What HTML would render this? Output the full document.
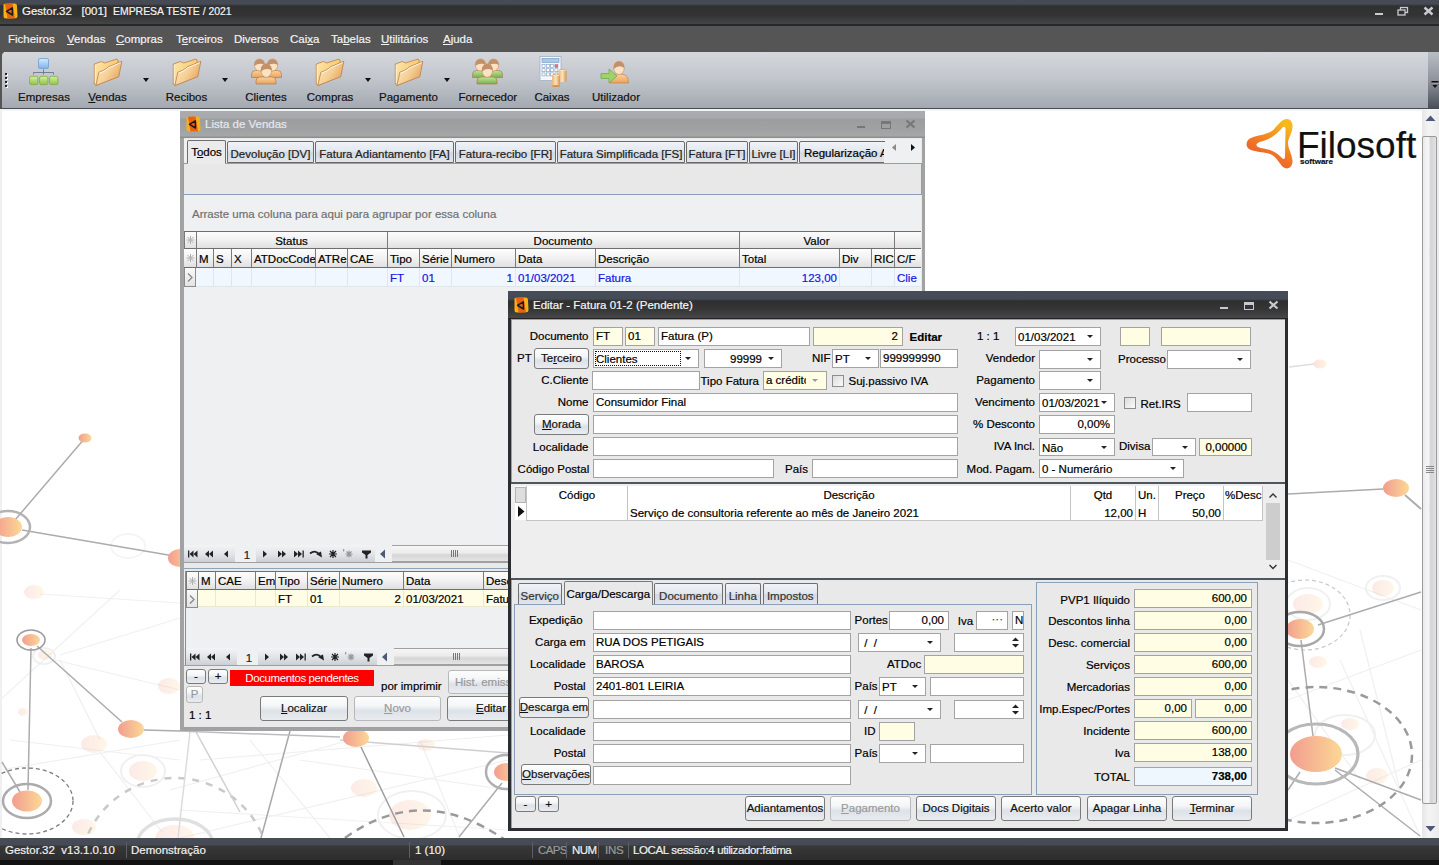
<!DOCTYPE html><html><head><meta charset="utf-8"><style>
*{margin:0;padding:0}
html,body{width:1439px;height:865px;overflow:hidden;background:#fff;font-family:"Liberation Sans",sans-serif;}
div{position:absolute;box-sizing:border-box}
.t{white-space:nowrap;line-height:1;-webkit-text-stroke:0.2px currentColor}
u{text-decoration:underline;text-underline-offset:1px}
svg{position:absolute}
</style></head><body>
<div style="left:0px;top:110px;width:1439px;height:728px;background:#fff"></div>
<div style="left:0px;top:110px;width:2px;height:728px;background:#eef0f2"></div>
<div style="left:0px;top:109px;width:1439px;height:2px;background:#f2f3f4"></div>
<svg style="left:0;top:0" width="1439" height="865"><defs><linearGradient id="og" x1="0" x2="1" y1="0" y2="0"><stop offset="0" stop-color="#f29d8f"/><stop offset="1" stop-color="#fcd896"/></linearGradient><linearGradient id="lg" x1="0" x2="1" y1="1" y2="0"><stop offset="0" stop-color="#ee4f2b"/><stop offset="1" stop-color="#f9b21a"/></linearGradient></defs><line x1="40" y1="594" x2="180" y2="603" stroke="#f0f0f0" stroke-width="1.2" opacity="1"/><line x1="60" y1="655" x2="180" y2="618" stroke="#f0f0f0" stroke-width="1.2" opacity="1"/><line x1="55" y1="660" x2="180" y2="690" stroke="#f0f0f0" stroke-width="1.2" opacity="1"/><line x1="0" y1="700" x2="120" y2="590" stroke="#f0f0f0" stroke-width="1.2" opacity="1"/><line x1="10" y1="740" x2="180" y2="760" stroke="#f0f0f0" stroke-width="1.2" opacity="1"/><line x1="0" y1="770" x2="180" y2="740" stroke="#f0f0f0" stroke-width="1.2" opacity="1"/><line x1="60" y1="660" x2="100" y2="740" stroke="#f0f0f0" stroke-width="1.2" opacity="1"/><line x1="100" y1="752" x2="162" y2="832" stroke="#f0f0f0" stroke-width="1.2" opacity="1"/><line x1="170" y1="790" x2="350" y2="740" stroke="#f0f0f0" stroke-width="1.2" opacity="1"/><line x1="200" y1="760" x2="508" y2="735" stroke="#f0f0f0" stroke-width="1.2" opacity="1"/><line x1="300" y1="760" x2="508" y2="790" stroke="#f0f0f0" stroke-width="1.2" opacity="1"/><line x1="180" y1="838" x2="508" y2="760" stroke="#f0f0f0" stroke-width="1.2" opacity="1"/><line x1="250" y1="740" x2="330" y2="838" stroke="#f0f0f0" stroke-width="1.2" opacity="1"/><line x1="420" y1="740" x2="460" y2="838" stroke="#f0f0f0" stroke-width="1.2" opacity="1"/><line x1="180" y1="810" x2="508" y2="830" stroke="#f0f0f0" stroke-width="1.2" opacity="1"/><line x1="1288" y1="560" x2="1421" y2="610" stroke="#f0f0f0" stroke-width="1.2" opacity="1"/><line x1="1288" y1="700" x2="1421" y2="650" stroke="#f0f0f0" stroke-width="1.2" opacity="1"/><line x1="1340" y1="660" x2="1421" y2="838" stroke="#f0f0f0" stroke-width="1.2" opacity="1"/><line x1="1288" y1="820" x2="1421" y2="760" stroke="#f0f0f0" stroke-width="1.2" opacity="1"/><line x1="1360" y1="630" x2="1400" y2="790" stroke="#f0f0f0" stroke-width="1.2" opacity="1"/><line x1="1288" y1="680" x2="1360" y2="780" stroke="#f0f0f0" stroke-width="1.2" opacity="1"/><ellipse cx="34" cy="592" rx="10" ry="7" fill="url(#og)" opacity="0.22"/><ellipse cx="169" cy="686" rx="11" ry="8" fill="url(#og)" opacity="0.22"/><ellipse cx="94" cy="744" rx="13" ry="9" fill="url(#og)" opacity="0.22"/><ellipse cx="84" cy="827" rx="12" ry="8" fill="url(#og)" opacity="0.22"/><ellipse cx="143" cy="771" rx="14" ry="10" fill="url(#og)" opacity="0.22"/><ellipse cx="175" cy="839" rx="20" ry="14" fill="url(#og)" opacity="0.22"/><ellipse cx="23" cy="712" rx="5" ry="4" fill="url(#og)" opacity="0.22"/><ellipse cx="45" cy="655" rx="7" ry="5" fill="url(#og)" opacity="0.22"/><ellipse cx="364" cy="788" rx="13" ry="9" fill="url(#og)" opacity="0.22"/><ellipse cx="410" cy="815" rx="21" ry="15" fill="url(#og)" opacity="0.22"/><ellipse cx="426" cy="745" rx="9" ry="6" fill="url(#og)" opacity="0.22"/><ellipse cx="1308" cy="604" rx="15" ry="10" fill="url(#og)" opacity="0.22"/><ellipse cx="1383" cy="588" rx="11" ry="8" fill="url(#og)" opacity="0.22"/><ellipse cx="1377" cy="776" rx="11" ry="8" fill="url(#og)" opacity="0.22"/><ellipse cx="1350" cy="724" rx="9" ry="6" fill="url(#og)" opacity="0.22"/><ellipse cx="1318" cy="662" rx="9" ry="6" fill="url(#og)" opacity="0.22"/><ellipse cx="128" cy="546" rx="17" ry="12" fill="none" stroke="#f5f5f5" stroke-width="2" opacity="1"/><ellipse cx="143" cy="771" rx="22" ry="16" fill="none" stroke="#f0f0f0" stroke-width="2" opacity="1"/><ellipse cx="44" cy="656" rx="11" ry="8" fill="none" stroke="#f0f0f0" stroke-width="2" opacity="1"/><ellipse cx="1383" cy="588" rx="17" ry="12" fill="none" stroke="#f0f0f0" stroke-width="2" opacity="1"/><ellipse cx="1308" cy="604" rx="22" ry="16" fill="none" stroke="#f0f0f0" stroke-width="2" opacity="1"/><ellipse cx="412" cy="815" rx="34" ry="24" fill="none" stroke="#f0f0f0" stroke-width="2" opacity="1"/><ellipse cx="1345" cy="735" rx="30" ry="20" fill="none" stroke="#f0f0f0" stroke-width="2" opacity="1"/><ellipse cx="175" cy="845" rx="38" ry="26" fill="none" stroke="#e0e0e0" stroke-width="3.5" opacity="1"/><ellipse cx="1305" cy="615" rx="45" ry="35" fill="none" stroke="#c8c8c8" stroke-width="1.2" stroke-dasharray="4 3" opacity="1"/><ellipse cx="175" cy="872" rx="95" ry="94" fill="none" stroke="#c9c9c9" stroke-width="2.5" stroke-dasharray="7 7" opacity="1"/><path d="M345 838 Q 422 782 505 840" fill="none" stroke="#9a9a9a" stroke-width="2.5" stroke-dasharray="8 6"/><line x1="1289" y1="367" x2="1314" y2="364" stroke="#dedede" stroke-width="1.5" opacity="1"/><ellipse cx="1320" cy="364" rx="6.5" ry="4.5" fill="url(#og)" opacity="0.3"/><line x1="85" y1="438" x2="15" y2="520" stroke="#acacac" stroke-width="1.5" opacity="1"/><line x1="22" y1="530" x2="180" y2="557" stroke="#acacac" stroke-width="1.5" opacity="1"/><line x1="31" y1="648" x2="28" y2="790" stroke="#acacac" stroke-width="1.5" opacity="1"/><line x1="37" y1="646" x2="122" y2="722" stroke="#acacac" stroke-width="1.5" opacity="1"/><line x1="144" y1="730" x2="180" y2="731" stroke="#acacac" stroke-width="1.5" opacity="1"/><line x1="2" y1="762" x2="20" y2="792" stroke="#acacac" stroke-width="1.5" opacity="1"/><line x1="290" y1="731" x2="261" y2="838" stroke="#a8a8a8" stroke-width="1.5" opacity="1"/><line x1="190" y1="732" x2="178" y2="838" stroke="#dcdcdc" stroke-width="1.5" opacity="1"/><line x1="196" y1="732" x2="240" y2="812" stroke="#d0d0d0" stroke-width="1.5" opacity="1"/><line x1="178" y1="731" x2="340" y2="737" stroke="#bdbdbd" stroke-width="1.5" opacity="1"/><line x1="361" y1="747" x2="404" y2="837" stroke="#9e9e9e" stroke-width="1.5" opacity="1"/><line x1="502" y1="783" x2="459" y2="837" stroke="#acacac" stroke-width="1.5" opacity="1"/><line x1="340" y1="740" x2="508" y2="753" stroke="#cfcfcf" stroke-width="1.5" opacity="1"/><line x1="1288" y1="494" x2="1383" y2="489" stroke="#acacac" stroke-width="1.5" opacity="1"/><line x1="1405" y1="495" x2="1421" y2="509" stroke="#acacac" stroke-width="2" opacity="1"/><line x1="1318" y1="625" x2="1421" y2="592" stroke="#acacac" stroke-width="1.5" opacity="1"/><line x1="1301" y1="640" x2="1313" y2="736" stroke="#acacac" stroke-width="1.5" opacity="1"/><line x1="1335" y1="768" x2="1421" y2="800" stroke="#acacac" stroke-width="1.5" opacity="1"/><line x1="1335" y1="770" x2="1420" y2="836" stroke="#acacac" stroke-width="1.5" opacity="1"/><line x1="1300" y1="772" x2="1288" y2="790" stroke="#acacac" stroke-width="1.5" opacity="1"/><ellipse cx="8" cy="527" rx="22" ry="16" fill="none" stroke="#b3b3b3" stroke-width="2.5" opacity="1"/><ellipse cx="31" cy="640" rx="14" ry="10" fill="none" stroke="#9d9d9d" stroke-width="1.6" opacity="1"/><ellipse cx="27" cy="801" rx="24" ry="17" fill="none" stroke="#ababab" stroke-width="2.5" opacity="1"/><ellipse cx="27" cy="801" rx="46" ry="33" fill="none" stroke="#7d7d7d" stroke-width="1.3" stroke-dasharray="4 3" opacity="1"/><ellipse cx="506" cy="772" rx="20" ry="17" fill="none" stroke="#b0b0b0" stroke-width="2.5" opacity="1"/><ellipse cx="1300" cy="629" rx="24" ry="17" fill="none" stroke="#a8a8a8" stroke-width="2.5" opacity="1"/><ellipse cx="1316" cy="754" rx="42" ry="30" fill="none" stroke="#b8b8b8" stroke-width="3.2" opacity="1"/><ellipse cx="1316" cy="755" rx="96" ry="68" fill="none" stroke="#9a9a9a" stroke-width="2.5" stroke-dasharray="8 6" opacity="1"/><ellipse cx="85" cy="438" rx="6.5" ry="4.5" fill="url(#og)" opacity="1"/><ellipse cx="8" cy="527" rx="14" ry="10" fill="url(#og)" opacity="1"/><ellipse cx="180" cy="558" rx="12" ry="9" fill="url(#og)" opacity="1"/><ellipse cx="31" cy="640" rx="9" ry="6" fill="url(#og)" opacity="1"/><ellipse cx="131" cy="729" rx="13" ry="9" fill="url(#og)" opacity="1"/><ellipse cx="27" cy="801" rx="15" ry="10.5" fill="url(#og)" opacity="1"/><ellipse cx="356" cy="738" rx="13" ry="9" fill="url(#og)" opacity="1"/><ellipse cx="506" cy="772" rx="12" ry="9" fill="url(#og)" opacity="1"/><ellipse cx="1396" cy="488" rx="13" ry="9" fill="url(#og)" opacity="1"/><ellipse cx="1300" cy="629" rx="14" ry="10" fill="url(#og)" opacity="1"/><ellipse cx="1316" cy="754" rx="26" ry="18" fill="url(#og)" opacity="1"/></svg>
<svg style="left:1240px;top:110px" width="60" height="65" viewBox="0 0 60 65"><defs><linearGradient id="lg2" x1="0.75" y1="0.05" x2="0.25" y2="0.95"><stop offset="0" stop-color="#f7b91a"/><stop offset="0.55" stop-color="#f17a26"/><stop offset="1" stop-color="#ea512d"/></linearGradient></defs><path fill-rule="evenodd" fill="url(#lg2)" d="M46 9 C50 8.5 53 12 52.5 17 C52 24 48 28 48 33 C48 39 53 46 52.5 52 C52 58 47 60 43 57 C39 53 36 46 30 44 C24 42 14 42 9 39 C5 36 6 30 11 28 C17 25 26 25 32 21 C37 17 40 10 46 9 Z M43 17 C45 16 46 18 45.5 21 L45 46 C45 49 44 50 42 48 C38 44 34 41 28 39.5 C22 38 17 38 16.5 35 C16 33 20 32 26 30 C32 28 38 23 43 17 Z"/></svg>
<div class="t" style="left:1297px;top:126.68px;font-size:37px;color:#111;">Filosoft</div>
<div class="t" style="left:1300px;top:158.23px;font-size:8px;color:#111;font-weight:bold;">software</div>
<div style="left:0px;top:0px;width:1439px;height:25px;background:linear-gradient(#464b55 0,#454a54 4px,#2f3030 6px,#333 15px,#454545 24px)"></div>
<div style="left:0px;top:24px;width:1439px;height:2px;background:#26292c"></div>
<svg style="left:2px;top:3px" width="16" height="16" viewBox="0 0 16 16"><path d="M1.5 3 Q1 0.5 4 0.8 L12.5 0.5 Q15 0.5 15 3 L15.5 13 Q15.5 15.5 13 15.3 L4 15.5 Q1.5 15.5 1.5 13 Z" fill="#f5b01a"/><path d="M3 0.8 L10.5 0.6 L13 15.3 L5.5 15.5 Z" fill="#e8620f"/><path d="M4.5 8.3 L10.3 4.8 L10.5 12 Z" fill="none" stroke="#1a1a1a" stroke-width="1.5" stroke-linejoin="round"/></svg>
<div class="t" style="left:22px;top:6.27px;font-size:11.5px;color:#f4f4f4;">Gestor.32&nbsp;&nbsp;&nbsp;[001]&nbsp;&nbsp;<span style="display:inline-block;transform:scaleX(0.907);transform-origin:0 0">EMPRESA TESTE / 2021</span></div>
<div style="left:1375px;top:13px;width:8px;height:2px;background:#c8ccd2"></div>
<svg style="left:1397px;top:6px" width="12" height="10"><rect x="3.5" y="1.5" width="7" height="5" fill="none" stroke="#c8ccd2" stroke-width="1.3"/><rect x="1" y="4" width="7" height="5" fill="#333" stroke="#c8ccd2" stroke-width="1.3"/></svg>
<svg style="left:1423px;top:6px" width="11" height="10"><path d="M1.5 1.5 L9.5 8.5 M9.5 1.5 L1.5 8.5" stroke="#c8ccd2" stroke-width="2.4"/></svg>
<div style="left:0px;top:26px;width:1439px;height:26px;background:#555"></div>
<div class="t" style="left:8px;top:34.27px;font-size:11.5px;color:#f2f2f2;">Ficheiros</div>
<div class="t" style="left:67px;top:34.27px;font-size:11.5px;color:#f2f2f2;"><u>V</u>endas</div>
<div class="t" style="left:116px;top:34.27px;font-size:11.5px;color:#f2f2f2;"><u>C</u>ompras</div>
<div class="t" style="left:176px;top:34.27px;font-size:11.5px;color:#f2f2f2;">T<u>e</u>rceiros</div>
<div class="t" style="left:234px;top:34.27px;font-size:11.5px;color:#f2f2f2;">Diversos</div>
<div class="t" style="left:290px;top:34.27px;font-size:11.5px;color:#f2f2f2;">Cai<u>x</u>a</div>
<div class="t" style="left:331px;top:34.27px;font-size:11.5px;color:#f2f2f2;">Ta<u>b</u>elas</div>
<div class="t" style="left:381px;top:34.27px;font-size:11.5px;color:#f2f2f2;"><u>U</u>tilitários</div>
<div class="t" style="left:443px;top:34.27px;font-size:11.5px;color:#f2f2f2;"><u>A</u>juda</div>
<div style="left:0px;top:52px;width:4px;height:57px;background:#555"></div>
<div style="left:2px;top:52px;width:1426px;height:56px;background:linear-gradient(#d4d7dc,#c3c7cd 45%,#a4a9b1);border-radius:4px 0 0 0"></div>
<div style="left:1428px;top:52px;width:11px;height:56px;background:linear-gradient(#b9bdc4,#8f949c 50%,#4b4f57)"></div>
<svg style="left:1431px;top:81px" width="8" height="9"><rect x="0.5" y="0" width="7" height="1.5" fill="#111"/><path d="M0.5 3 L7.5 3 L4 7 Z" fill="#111"/><path d="M1 3.2 L7 3.2" stroke="#fff" stroke-width="0.6"/></svg>
<div style="left:0px;top:108px;width:1439px;height:1px;background:#474c54"></div>
<div style="left:6px;top:74px;width:2px;height:2px;background:#fff"></div>
<div style="left:5px;top:73px;width:2px;height:2px;background:#222"></div>
<div style="left:6px;top:78px;width:2px;height:2px;background:#fff"></div>
<div style="left:5px;top:77px;width:2px;height:2px;background:#222"></div>
<div style="left:6px;top:82px;width:2px;height:2px;background:#fff"></div>
<div style="left:5px;top:81px;width:2px;height:2px;background:#222"></div>
<div style="left:6px;top:86px;width:2px;height:2px;background:#fff"></div>
<div style="left:5px;top:85px;width:2px;height:2px;background:#222"></div>
<svg style="left:0;top:0" width="1" height="1"><defs>
<linearGradient id="fo1" x1="0" y1="0" x2="1" y2="0.5"><stop offset="0" stop-color="#fde7b0"/><stop offset="1" stop-color="#f6c566"/></linearGradient>
<linearGradient id="fo2" x1="0" y1="0.2" x2="1" y2="0.8"><stop offset="0" stop-color="#fde6bc"/><stop offset="0.5" stop-color="#f5cf94"/><stop offset="1" stop-color="#e39a52"/></linearGradient>
<linearGradient id="bl" x1="0" y1="0" x2="0" y2="1"><stop offset="0" stop-color="#d5e9fb"/><stop offset="1" stop-color="#7fb2e6"/></linearGradient>
<linearGradient id="gr" x1="0" y1="0" x2="0" y2="1"><stop offset="0" stop-color="#d6ef9c"/><stop offset="1" stop-color="#8fc44a"/></linearGradient>
<radialGradient id="sk" cx="0.5" cy="0.4" r="0.6"><stop offset="0" stop-color="#fbdcb8"/><stop offset="1" stop-color="#d9955c"/></radialGradient>
<linearGradient id="bo" x1="0" y1="0" x2="0" y2="1"><stop offset="0" stop-color="#fad2a0"/><stop offset="1" stop-color="#e9a35c"/></linearGradient>
<linearGradient id="bg2" x1="0" y1="0" x2="0" y2="1"><stop offset="0" stop-color="#c4e49a"/><stop offset="1" stop-color="#77b04a"/></linearGradient>
<linearGradient id="co" x1="0" y1="0" x2="1" y2="0"><stop offset="0" stop-color="#e9b679"/><stop offset="0.5" stop-color="#fde2b8"/><stop offset="1" stop-color="#d59552"/></linearGradient>
</defs></svg>
<svg style="left:29px;top:58px" width="30" height="28" viewBox="0 0 30 28"><rect x="9.5" y="0.5" width="10" height="10" rx="1.5" fill="url(#bl)" stroke="#6d9fd3" stroke-width="0.8"/><path d="M14.5 11.5 V16.5 M4.5 16.5 V14.5 H24.5 V16.5" stroke="#69778a" stroke-width="0.9" fill="none"/><rect x="0.6" y="18.3" width="8.3" height="8.3" rx="1.5" fill="url(#gr)" stroke="#7cab3e" stroke-width="0.8"/><rect x="10.6" y="18.3" width="8.3" height="8.3" rx="1.5" fill="url(#gr)" stroke="#7cab3e" stroke-width="0.8"/><rect x="20.6" y="18.3" width="8.3" height="8.3" rx="1.5" fill="url(#gr)" stroke="#7cab3e" stroke-width="0.8"/></svg>
<svg style="left:93px;top:58px" width="30" height="29" viewBox="0 0 30 29"><path d="M1.3 6 L8.5 3.5 L11.7 5 L24 1 L25 2 L25.5 18 L3 27.5 L1.3 26 Z" fill="url(#fo1)" stroke="#b98048" stroke-width="0.8"/><path d="M5.8 14.3 Q11 12.5 13.5 10.5 Q15 8.5 17 8.2 L28.8 3.3 L25.8 18.7 L2.9 27.5 Z" fill="url(#fo2)" stroke="#b98048" stroke-width="0.8"/><path d="M6.5 15.2 Q11.5 13.3 14 11.3 Q15.5 9.4 17.3 9.1 L27.8 4.6" fill="none" stroke="#fff" stroke-width="0.9" opacity="0.9"/><path d="M2.2 7 L2.2 25" stroke="#fff" stroke-width="0.8" opacity="0.7"/></svg>
<svg style="left:172px;top:58px" width="30" height="29" viewBox="0 0 30 29"><path d="M1.3 6 L8.5 3.5 L11.7 5 L24 1 L25 2 L25.5 18 L3 27.5 L1.3 26 Z" fill="url(#fo1)" stroke="#b98048" stroke-width="0.8"/><path d="M5.8 14.3 Q11 12.5 13.5 10.5 Q15 8.5 17 8.2 L28.8 3.3 L25.8 18.7 L2.9 27.5 Z" fill="url(#fo2)" stroke="#b98048" stroke-width="0.8"/><path d="M6.5 15.2 Q11.5 13.3 14 11.3 Q15.5 9.4 17.3 9.1 L27.8 4.6" fill="none" stroke="#fff" stroke-width="0.9" opacity="0.9"/><path d="M2.2 7 L2.2 25" stroke="#fff" stroke-width="0.8" opacity="0.7"/></svg>
<svg style="left:315px;top:58px" width="30" height="29" viewBox="0 0 30 29"><path d="M1.3 6 L8.5 3.5 L11.7 5 L24 1 L25 2 L25.5 18 L3 27.5 L1.3 26 Z" fill="url(#fo1)" stroke="#b98048" stroke-width="0.8"/><path d="M5.8 14.3 Q11 12.5 13.5 10.5 Q15 8.5 17 8.2 L28.8 3.3 L25.8 18.7 L2.9 27.5 Z" fill="url(#fo2)" stroke="#b98048" stroke-width="0.8"/><path d="M6.5 15.2 Q11.5 13.3 14 11.3 Q15.5 9.4 17.3 9.1 L27.8 4.6" fill="none" stroke="#fff" stroke-width="0.9" opacity="0.9"/><path d="M2.2 7 L2.2 25" stroke="#fff" stroke-width="0.8" opacity="0.7"/></svg>
<svg style="left:394px;top:58px" width="30" height="29" viewBox="0 0 30 29"><path d="M1.3 6 L8.5 3.5 L11.7 5 L24 1 L25 2 L25.5 18 L3 27.5 L1.3 26 Z" fill="url(#fo1)" stroke="#b98048" stroke-width="0.8"/><path d="M5.8 14.3 Q11 12.5 13.5 10.5 Q15 8.5 17 8.2 L28.8 3.3 L25.8 18.7 L2.9 27.5 Z" fill="url(#fo2)" stroke="#b98048" stroke-width="0.8"/><path d="M6.5 15.2 Q11.5 13.3 14 11.3 Q15.5 9.4 17.3 9.1 L27.8 4.6" fill="none" stroke="#fff" stroke-width="0.9" opacity="0.9"/><path d="M2.2 7 L2.2 25" stroke="#fff" stroke-width="0.8" opacity="0.7"/></svg>
<svg style="left:251px;top:58px" width="32" height="28" viewBox="0 0 32 28"><path d="M0.5 19.5 L0.5 16.5 Q0.5 12.5 4.5 12.5 L8.5 12.5 Q12.5 12.5 12.5 16.5 L12.5 19.5 Z" fill="url(#bo)" stroke="#b97a3e" stroke-width="0.7"/><ellipse cx="8.5" cy="7" rx="5.2" ry="6" fill="#fbe2c2" stroke="#c09070" stroke-width="0.6"/><path d="M3.3 7 Q3.3 1 8.5 1 Q13.7 1 13.7 7 Q8.5 4.0 3.3 8 Z" fill="#c2916a"/><path d="M18.5 19.5 L18.5 16.5 Q18.5 12.5 22.5 12.5 L26.5 12.5 Q30.5 12.5 30.5 16.5 L30.5 19.5 Z" fill="url(#bo)" stroke="#b97a3e" stroke-width="0.7"/><ellipse cx="21.5" cy="7" rx="5.2" ry="6" fill="#fbe2c2" stroke="#c09070" stroke-width="0.6"/><path d="M16.3 7 Q16.3 1 21.5 1 Q26.7 1 26.7 7 Q21.5 4.0 16.3 8 Z" fill="#c2916a"/><path d="M5 26 L5 23 Q5 19 9 19 L21 19 Q25 19 25 23 L25 26 Z" fill="url(#bo)" stroke="#b97a3e" stroke-width="0.7"/><ellipse cx="15.3" cy="12.5" rx="5.3" ry="6.8" fill="#fbe2c2" stroke="#c09070" stroke-width="0.6"/><path d="M10.0 12.5 Q10.0 5.7 15.3 5.7 Q20.6 5.7 20.6 12.5 Q15.3 9.1 10.0 13.5 Z" fill="#c2916a"/></svg>
<svg style="left:472px;top:58px" width="32" height="28" viewBox="0 0 32 28"><path d="M0.5 19.5 L0.5 16.5 Q0.5 12.5 4.5 12.5 L8.5 12.5 Q12.5 12.5 12.5 16.5 L12.5 19.5 Z" fill="url(#bg2)" stroke="#b97a3e" stroke-width="0.7"/><ellipse cx="8.5" cy="7" rx="5.2" ry="6" fill="#fbe2c2" stroke="#c09070" stroke-width="0.6"/><path d="M3.3 7 Q3.3 1 8.5 1 Q13.7 1 13.7 7 Q8.5 4.0 3.3 8 Z" fill="#c2916a"/><path d="M18.5 19.5 L18.5 16.5 Q18.5 12.5 22.5 12.5 L26.5 12.5 Q30.5 12.5 30.5 16.5 L30.5 19.5 Z" fill="url(#bg2)" stroke="#b97a3e" stroke-width="0.7"/><ellipse cx="21.5" cy="7" rx="5.2" ry="6" fill="#fbe2c2" stroke="#c09070" stroke-width="0.6"/><path d="M16.3 7 Q16.3 1 21.5 1 Q26.7 1 26.7 7 Q21.5 4.0 16.3 8 Z" fill="#c2916a"/><path d="M5 26 L5 23 Q5 19 9 19 L21 19 Q25 19 25 23 L25 26 Z" fill="url(#bg2)" stroke="#b97a3e" stroke-width="0.7"/><ellipse cx="15.3" cy="12.5" rx="5.3" ry="6.8" fill="#fbe2c2" stroke="#c09070" stroke-width="0.6"/><path d="M10.0 12.5 Q10.0 5.7 15.3 5.7 Q20.6 5.7 20.6 12.5 Q15.3 9.1 10.0 13.5 Z" fill="#c2916a"/></svg>
<svg style="left:539px;top:56px" width="28" height="31" viewBox="0 0 28 31"><rect x="1" y="0.5" width="21" height="24" fill="#f4f8fd" stroke="#9fb2c8" stroke-width="0.8"/><rect x="3" y="2.5" width="17" height="4" fill="#a9c8ea" stroke="#6f94bd" stroke-width="0.6"/><rect x="3.0" y="8.5" width="3" height="3" fill="#fff" stroke="#7d9cc0" stroke-width="0.6"/><rect x="7.3" y="8.5" width="3" height="3" fill="#fff" stroke="#7d9cc0" stroke-width="0.6"/><rect x="11.6" y="8.5" width="3" height="3" fill="#fff" stroke="#7d9cc0" stroke-width="0.6"/><rect x="15.899999999999999" y="8.5" width="3" height="3" fill="#fff" stroke="#7d9cc0" stroke-width="0.6"/><rect x="3.0" y="12.7" width="3" height="3" fill="#fff" stroke="#7d9cc0" stroke-width="0.6"/><rect x="7.3" y="12.7" width="3" height="3" fill="#fff" stroke="#7d9cc0" stroke-width="0.6"/><rect x="11.6" y="12.7" width="3" height="3" fill="#fff" stroke="#7d9cc0" stroke-width="0.6"/><rect x="15.899999999999999" y="12.7" width="3" height="3" fill="#fff" stroke="#7d9cc0" stroke-width="0.6"/><rect x="3.0" y="16.9" width="3" height="3" fill="#fff" stroke="#7d9cc0" stroke-width="0.6"/><rect x="7.3" y="16.9" width="3" height="3" fill="#fff" stroke="#7d9cc0" stroke-width="0.6"/><rect x="11.6" y="16.9" width="3" height="3" fill="#fff" stroke="#7d9cc0" stroke-width="0.6"/><rect x="15.899999999999999" y="16.9" width="3" height="3" fill="#fff" stroke="#7d9cc0" stroke-width="0.6"/><rect x="15.9" y="8.5" width="3" height="3" fill="#e66"/><ellipse cx="23.5" cy="15" rx="4" ry="1.8" fill="#fbe0b5" stroke="#c98d52" stroke-width="0.5"/><rect x="19.5" y="15" width="8" height="11" fill="url(#co)"/><ellipse cx="17" cy="20" rx="4" ry="1.8" fill="#fbe0b5" stroke="#c98d52" stroke-width="0.5"/><rect x="13" y="20" width="8" height="10" fill="url(#co)"/><ellipse cx="17" cy="30" rx="4" ry="1" fill="#d59552"/></svg>
<svg style="left:600px;top:58px" width="30" height="28" viewBox="0 0 30 28"><path d="M9.5 25 Q9.5 17 16 16 L22 16 Q28.5 17 28.5 25 Z" fill="url(#bo)" stroke="#c0854c" stroke-width="0.7"/><ellipse cx="19" cy="10" rx="5.3" ry="6.5" fill="#fbe2c2" stroke="#c09070" stroke-width="0.6"/><path d="M13.7 10 Q13.5 3.3 19 3.3 Q24.5 3.3 24.3 10 Q19 6 13.7 11 Z" fill="#c2916a"/><path d="M1 15.5 H9 V11 L17 18 L9 25 V20.5 H1 Z" fill="#9fd36a" stroke="#6aa843" stroke-width="0.7"/></svg>
<div style="left:143px;top:78px;width:0;height:0;border-left:3.5px solid transparent;border-right:3.5px solid transparent;border-top:4px solid #111"></div>
<div style="left:222px;top:78px;width:0;height:0;border-left:3.5px solid transparent;border-right:3.5px solid transparent;border-top:4px solid #111"></div>
<div style="left:365px;top:78px;width:0;height:0;border-left:3.5px solid transparent;border-right:3.5px solid transparent;border-top:4px solid #111"></div>
<div style="left:444px;top:78px;width:0;height:0;border-left:3.5px solid transparent;border-right:3.5px solid transparent;border-top:4px solid #111"></div>
<div class="t" style="left:-6.0px;width:100px;text-align:center;top:91.77px;font-size:11.5px;color:#111;">Empresas</div>
<div class="t" style="left:57.5px;width:100px;text-align:center;top:91.77px;font-size:11.5px;color:#111;"><u>V</u>endas</div>
<div class="t" style="left:136.5px;width:100px;text-align:center;top:91.77px;font-size:11.5px;color:#111;">Recibos</div>
<div class="t" style="left:216.0px;width:100px;text-align:center;top:91.77px;font-size:11.5px;color:#111;">Clientes</div>
<div class="t" style="left:280.0px;width:100px;text-align:center;top:91.77px;font-size:11.5px;color:#111;">Compras</div>
<div class="t" style="left:358.4px;width:100px;text-align:center;top:91.77px;font-size:11.5px;color:#111;">Pagamento</div>
<div class="t" style="left:437.8px;width:100px;text-align:center;top:91.77px;font-size:11.5px;color:#111;">Fornecedor</div>
<div class="t" style="left:502.0px;width:100px;text-align:center;top:91.77px;font-size:11.5px;color:#111;">Caixas</div>
<div class="t" style="left:566.0px;width:100px;text-align:center;top:91.77px;font-size:11.5px;color:#111;">Utilizador</div>
<div style="left:1422px;top:110px;width:17px;height:728px;background:linear-gradient(90deg,#e6e6e6,#f4f4f4 40%,#ececec)"></div>
<svg style="left:1424px;top:114px" width="13" height="8"><path d="M1.5 7 L6.5 1.5 L11.5 7 Z" fill="#4c5a7a"/></svg>
<svg style="left:1424px;top:825px" width="13" height="8"><path d="M1.5 1 L6.5 6.5 L11.5 1 Z" fill="#4c5a7a"/></svg>
<div style="left:1422px;top:136px;width:15px;height:668px;border:1px solid #9a9a9a;border-radius:2px;background:linear-gradient(90deg,#e9e9e9,#f7f7f7 40%,#d4d4d6 60%,#e2e2e4)"></div>
<div style="left:1426px;top:466px;width:8px;height:1px;background:#888"></div>
<div style="left:1426px;top:468px;width:8px;height:1px;background:#888"></div>
<div style="left:1426px;top:470px;width:8px;height:1px;background:#888"></div>
<div style="left:1426px;top:472px;width:8px;height:1px;background:#888"></div>
<div style="left:0px;top:838px;width:1439px;height:22px;background:linear-gradient(#474c57 0,#454a55 7px,#383838 8px,#333 14px,#2d2d2d 21px)"></div>
<div style="left:0px;top:860px;width:1439px;height:5px;background:#121212"></div>
<div style="left:393px;top:860px;width:48px;height:5px;background:#333"></div>
<div class="t" style="left:5px;top:845.27px;font-size:11.5px;color:#f0f0f0;">Gestor.32&nbsp;&nbsp;v13.1.0.10</div>
<div class="t" style="left:131px;top:845.27px;font-size:11.5px;color:#f0f0f0;">Demonstração</div>
<div class="t" style="left:415px;top:845.27px;font-size:11.5px;color:#f0f0f0;">1 (10)</div>
<div class="t" style="left:538px;top:845.27px;font-size:11.5px;color:#9a9a9a;letter-spacing:-0.6px">CAPS</div>
<div class="t" style="left:572px;top:845.27px;font-size:11.5px;color:#f0f0f0;letter-spacing:-0.6px">NUM</div>
<div class="t" style="left:605px;top:845.27px;font-size:11.5px;color:#9a9a9a;letter-spacing:-0.3px">INS</div>
<div class="t" style="left:633px;top:845.27px;font-size:11.5px;color:#f0f0f0;letter-spacing:-0.37px">LOCAL sessão:4 utilizador:fatima</div>
<div style="left:126px;top:842px;width:1px;height:16px;background:#1f2226;border-right:1px solid #5a5e66"></div>
<div style="left:409px;top:842px;width:1px;height:16px;background:#1f2226;border-right:1px solid #5a5e66"></div>
<div style="left:532px;top:842px;width:1px;height:16px;background:#1f2226;border-right:1px solid #5a5e66"></div>
<div style="left:566px;top:842px;width:1px;height:16px;background:#1f2226;border-right:1px solid #5a5e66"></div>
<div style="left:598px;top:842px;width:1px;height:16px;background:#1f2226;border-right:1px solid #5a5e66"></div>
<div style="left:628px;top:842px;width:1px;height:16px;background:#1f2226;border-right:1px solid #5a5e66"></div>
<div style="left:180px;top:111px;width:745px;height:620px;background:#a2a2a2"></div>
<div style="left:180px;top:111px;width:745px;height:27px;background:linear-gradient(#aaabaf,#a8a9ac 7px,#9c9d9f 8px,#a0a1a3 18px,#a6a7a9 25px,#8f8f8f 26px)"></div>
<svg style="left:185px;top:116px" width="16" height="16" viewBox="0 0 16 16"><path d="M1.5 3 Q1 0.5 4 0.8 L12.5 0.5 Q15 0.5 15 3 L15.5 13 Q15.5 15.5 13 15.3 L4 15.5 Q1.5 15.5 1.5 13 Z" fill="#f5b01a"/><path d="M3 0.8 L10.5 0.6 L13 15.3 L5.5 15.5 Z" fill="#e8620f"/><path d="M4.5 8.3 L10.3 4.8 L10.5 12 Z" fill="none" stroke="#1a1a1a" stroke-width="1.5" stroke-linejoin="round"/></svg>
<div class="t" style="left:205px;top:119.27px;font-size:11.5px;color:#e4e8ef;">Lista de Vendas</div>
<div style="left:857px;top:126px;width:8px;height:2px;background:#777"></div>
<div style="left:881px;top:121px;width:10px;height:8px;border:1.5px solid #777;border-top-width:3px"></div>
<svg style="left:905px;top:119px" width="11" height="10"><path d="M1.5 1.5 L9.5 8.5 M9.5 1.5 L1.5 8.5" stroke="#777" stroke-width="2.2"/></svg>
<div style="left:183px;top:138px;width:739px;height:590px;background:#e9e9e9;border-left:1px solid #a4a4a4;border-bottom:1px solid #8ea4bc"></div>
<div style="left:184px;top:139px;width:737px;height:24px;background:#eef0f2"></div>
<div style="left:227px;top:141px;width:87px;height:22px;background:linear-gradient(#f0f3f8,#e3e8ef 45%,#d3d9e1 55%,#e2e6ec);border:1px solid #6a6a6a;border-radius:2px 2px 0 0"></div>
<div class="t" style="left:170.5px;width:200px;text-align:center;top:149.27px;font-size:11.5px;color:#222;">Devolução [DV]</div>
<div style="left:315px;top:141px;width:139px;height:22px;background:linear-gradient(#f0f3f8,#e3e8ef 45%,#d3d9e1 55%,#e2e6ec);border:1px solid #6a6a6a;border-radius:2px 2px 0 0"></div>
<div class="t" style="left:284.5px;width:200px;text-align:center;top:149.27px;font-size:11.5px;color:#222;">Fatura Adiantamento [FA]</div>
<div style="left:455px;top:141px;width:101px;height:22px;background:linear-gradient(#f0f3f8,#e3e8ef 45%,#d3d9e1 55%,#e2e6ec);border:1px solid #6a6a6a;border-radius:2px 2px 0 0"></div>
<div class="t" style="left:405.5px;width:200px;text-align:center;top:149.27px;font-size:11.5px;color:#222;">Fatura-recibo [FR]</div>
<div style="left:557px;top:141px;width:128px;height:22px;background:linear-gradient(#f0f3f8,#e3e8ef 45%,#d3d9e1 55%,#e2e6ec);border:1px solid #6a6a6a;border-radius:2px 2px 0 0"></div>
<div class="t" style="left:521.0px;width:200px;text-align:center;top:149.27px;font-size:11.5px;color:#222;">Fatura Simplificada [FS]</div>
<div style="left:686px;top:141px;width:62px;height:22px;background:linear-gradient(#f0f3f8,#e3e8ef 45%,#d3d9e1 55%,#e2e6ec);border:1px solid #6a6a6a;border-radius:2px 2px 0 0"></div>
<div class="t" style="left:617.0px;width:200px;text-align:center;top:149.27px;font-size:11.5px;color:#222;">Fatura [FT]</div>
<div style="left:749px;top:141px;width:49px;height:22px;background:linear-gradient(#f0f3f8,#e3e8ef 45%,#d3d9e1 55%,#e2e6ec);border:1px solid #6a6a6a;border-radius:2px 2px 0 0"></div>
<div class="t" style="left:673.5px;width:200px;text-align:center;top:149.27px;font-size:11.5px;color:#222;">Livre [LI]</div>
<div style="left:799px;top:141px;width:86px;height:22px;overflow:hidden">
<div style="left:0;top:0;width:120px;height:22px;background:linear-gradient(#f0f3f8,#e3e8ef 45%,#d3d9e1 55%,#e2e6ec);border:1px solid #6a6a6a;border-radius:2px 2px 0 0"></div>
<div class="t" style="left:5px;top:7.3px;font-size:11.5px;color:#000;-webkit-text-stroke:0.2px #000">Regularização ATX</div>
</div>
<div style="left:884px;top:142px;width:37px;height:21px;background:#eef0f2"></div>
<svg style="left:890px;top:143px" width="30" height="10"><path d="M6 1 L2 4.5 L6 8 Z" fill="#8a8a8a"/><path d="M21 1 L25 4.5 L21 8 Z" fill="#111"/></svg>
<div style="left:187px;top:140px;width:39px;height:24px;background:#ebebeb;border:1px solid #6e6e6e;border-bottom:none;border-radius:2px 2px 0 0"></div>
<div class="t" style="left:106.5px;width:200px;text-align:center;top:147.27px;font-size:11.5px;color:#000;">T<u>o</u>dos</div>
<div style="left:183px;top:163px;width:739px;height:32px;background:#e8e8e8;border:1px solid #8aa0b8"></div>
<div style="left:188px;top:163px;width:37px;height:1px;background:#ebebeb"></div>
<div style="left:184px;top:195px;width:737px;height:36px;background:#eff0f2"></div>
<div class="t" style="left:192px;top:209.27px;font-size:11.5px;color:#707070;">Arraste uma coluna para aqui para agrupar por essa coluna</div>
<div style="left:184px;top:231px;width:737px;height:314px;background:#eff0f2"></div>
<div style="left:184px;top:231px;width:12px;height:18px;background:linear-gradient(#fdfdfd,#f2f2f2 50%,#e0e0e2);border-left:1px solid #7a7a7a;border-bottom:1px solid #6e6e6e"></div>
<div style="left:196px;top:231px;width:191px;height:18px;background:linear-gradient(#fdfdfd,#f2f2f2 50%,#e0e0e2);border-left:1px solid #7a7a7a;border-bottom:1px solid #6e6e6e"></div>
<div class="t" style="left:166.0px;width:251px;text-align:center;top:236.27px;font-size:11.5px;color:#000;">Status</div>
<div style="left:387px;top:231px;width:352px;height:18px;background:linear-gradient(#fdfdfd,#f2f2f2 50%,#e0e0e2);border-left:1px solid #7a7a7a;border-bottom:1px solid #6e6e6e"></div>
<div class="t" style="left:357.0px;width:412px;text-align:center;top:236.27px;font-size:11.5px;color:#000;">Documento</div>
<div style="left:739px;top:231px;width:155px;height:18px;background:linear-gradient(#fdfdfd,#f2f2f2 50%,#e0e0e2);border-left:1px solid #7a7a7a;border-bottom:1px solid #6e6e6e"></div>
<div class="t" style="left:709.0px;width:215px;text-align:center;top:236.27px;font-size:11.5px;color:#000;">Valor</div>
<div style="left:894px;top:231px;width:27px;height:18px;background:linear-gradient(#fdfdfd,#f2f2f2 50%,#e0e0e2);border-left:1px solid #7a7a7a;border-bottom:1px solid #6e6e6e"></div>
<div style="left:184px;top:231px;width:737px;height:1px;background:#6e6e6e"></div>
<div style="left:184px;top:249px;width:12px;height:19px;overflow:hidden;background:linear-gradient(#fdfdfd,#f2f2f2 50%,#e0e0e2);border-left:0px solid #7a7a7a;border-bottom:1px solid #6e6e6e"><div class="t" style="left:2px;top:5.3px;font-size:11.5px;color:#000;-webkit-text-stroke:0.2px #000"></div></div>
<div style="left:196px;top:249px;width:17px;height:19px;overflow:hidden;background:linear-gradient(#fdfdfd,#f2f2f2 50%,#e0e0e2);border-left:1px solid #7a7a7a;border-bottom:1px solid #6e6e6e"><div class="t" style="left:2px;top:5.3px;font-size:11.5px;color:#000;-webkit-text-stroke:0.2px #000">M</div></div>
<div style="left:213px;top:249px;width:18px;height:19px;overflow:hidden;background:linear-gradient(#fdfdfd,#f2f2f2 50%,#e0e0e2);border-left:1px solid #7a7a7a;border-bottom:1px solid #6e6e6e"><div class="t" style="left:2px;top:5.3px;font-size:11.5px;color:#000;-webkit-text-stroke:0.2px #000">S</div></div>
<div style="left:231px;top:249px;width:20px;height:19px;overflow:hidden;background:linear-gradient(#fdfdfd,#f2f2f2 50%,#e0e0e2);border-left:1px solid #7a7a7a;border-bottom:1px solid #6e6e6e"><div class="t" style="left:2px;top:5.3px;font-size:11.5px;color:#000;-webkit-text-stroke:0.2px #000">X</div></div>
<div style="left:251px;top:249px;width:64px;height:19px;overflow:hidden;background:linear-gradient(#fdfdfd,#f2f2f2 50%,#e0e0e2);border-left:1px solid #7a7a7a;border-bottom:1px solid #6e6e6e"><div class="t" style="left:2px;top:5.3px;font-size:11.5px;color:#000;-webkit-text-stroke:0.2px #000">ATDocCode</div></div>
<div style="left:315px;top:249px;width:32px;height:19px;overflow:hidden;background:linear-gradient(#fdfdfd,#f2f2f2 50%,#e0e0e2);border-left:1px solid #7a7a7a;border-bottom:1px solid #6e6e6e"><div class="t" style="left:2px;top:5.3px;font-size:11.5px;color:#000;-webkit-text-stroke:0.2px #000">ATRe</div></div>
<div style="left:347px;top:249px;width:40px;height:19px;overflow:hidden;background:linear-gradient(#fdfdfd,#f2f2f2 50%,#e0e0e2);border-left:1px solid #7a7a7a;border-bottom:1px solid #6e6e6e"><div class="t" style="left:2px;top:5.3px;font-size:11.5px;color:#000;-webkit-text-stroke:0.2px #000">CAE</div></div>
<div style="left:387px;top:249px;width:32px;height:19px;overflow:hidden;background:linear-gradient(#fdfdfd,#f2f2f2 50%,#e0e0e2);border-left:1px solid #7a7a7a;border-bottom:1px solid #6e6e6e"><div class="t" style="left:2px;top:5.3px;font-size:11.5px;color:#000;-webkit-text-stroke:0.2px #000">Tipo</div></div>
<div style="left:419px;top:249px;width:32px;height:19px;overflow:hidden;background:linear-gradient(#fdfdfd,#f2f2f2 50%,#e0e0e2);border-left:1px solid #7a7a7a;border-bottom:1px solid #6e6e6e"><div class="t" style="left:2px;top:5.3px;font-size:11.5px;color:#000;-webkit-text-stroke:0.2px #000">Série</div></div>
<div style="left:451px;top:249px;width:64px;height:19px;overflow:hidden;background:linear-gradient(#fdfdfd,#f2f2f2 50%,#e0e0e2);border-left:1px solid #7a7a7a;border-bottom:1px solid #6e6e6e"><div class="t" style="left:2px;top:5.3px;font-size:11.5px;color:#000;-webkit-text-stroke:0.2px #000">Numero</div></div>
<div style="left:515px;top:249px;width:80px;height:19px;overflow:hidden;background:linear-gradient(#fdfdfd,#f2f2f2 50%,#e0e0e2);border-left:1px solid #7a7a7a;border-bottom:1px solid #6e6e6e"><div class="t" style="left:2px;top:5.3px;font-size:11.5px;color:#000;-webkit-text-stroke:0.2px #000">Data</div></div>
<div style="left:595px;top:249px;width:144px;height:19px;overflow:hidden;background:linear-gradient(#fdfdfd,#f2f2f2 50%,#e0e0e2);border-left:1px solid #7a7a7a;border-bottom:1px solid #6e6e6e"><div class="t" style="left:2px;top:5.3px;font-size:11.5px;color:#000;-webkit-text-stroke:0.2px #000">Descrição</div></div>
<div style="left:739px;top:249px;width:100px;height:19px;overflow:hidden;background:linear-gradient(#fdfdfd,#f2f2f2 50%,#e0e0e2);border-left:1px solid #7a7a7a;border-bottom:1px solid #6e6e6e"><div class="t" style="left:2px;top:5.3px;font-size:11.5px;color:#000;-webkit-text-stroke:0.2px #000">Total</div></div>
<div style="left:839px;top:249px;width:32px;height:19px;overflow:hidden;background:linear-gradient(#fdfdfd,#f2f2f2 50%,#e0e0e2);border-left:1px solid #7a7a7a;border-bottom:1px solid #6e6e6e"><div class="t" style="left:2px;top:5.3px;font-size:11.5px;color:#000;-webkit-text-stroke:0.2px #000">Div</div></div>
<div style="left:871px;top:249px;width:23px;height:19px;overflow:hidden;background:linear-gradient(#fdfdfd,#f2f2f2 50%,#e0e0e2);border-left:1px solid #7a7a7a;border-bottom:1px solid #6e6e6e"><div class="t" style="left:2px;top:5.3px;font-size:11.5px;color:#000;-webkit-text-stroke:0.2px #000">RIC</div></div>
<div style="left:894px;top:249px;width:27px;height:19px;overflow:hidden;background:linear-gradient(#fdfdfd,#f2f2f2 50%,#e0e0e2);border-left:1px solid #7a7a7a;border-bottom:1px solid #6e6e6e"><div class="t" style="left:2px;top:5.3px;font-size:11.5px;color:#000;-webkit-text-stroke:0.2px #000">C/F</div></div>
<svg style="left:186px;top:235px" width="9" height="30"><g stroke="#b0b0b0" stroke-width="1"><path d="M4.5 1 V9 M0.5 5 H8.5 M1.5 2 L7.5 8 M7.5 2 L1.5 8"/><path d="M4.5 19 V27 M0.5 23 H8.5 M1.5 20 L7.5 26 M7.5 20 L1.5 26"/></g></svg>
<div style="left:184px;top:268px;width:737px;height:19px;background:#f1f7ff;border-bottom:1px solid #e0e6ee"></div>
<div style="left:184px;top:268px;width:12px;height:19px;background:linear-gradient(#fafafa,#e4e4e4);border:1px solid #8c8c8c;border-top:none"></div>
<svg style="left:186px;top:272px" width="8" height="11"><path d="M2 1.5 L6 5.5 L2 9.5" stroke="#888" stroke-width="1.3" fill="none"/></svg>
<div style="left:213px;top:268px;width:1px;height:19px;background:#e2e6ec"></div>
<div style="left:231px;top:268px;width:1px;height:19px;background:#e2e6ec"></div>
<div style="left:251px;top:268px;width:1px;height:19px;background:#e2e6ec"></div>
<div style="left:315px;top:268px;width:1px;height:19px;background:#e2e6ec"></div>
<div style="left:347px;top:268px;width:1px;height:19px;background:#e2e6ec"></div>
<div style="left:387px;top:268px;width:1px;height:19px;background:#e2e6ec"></div>
<div style="left:419px;top:268px;width:1px;height:19px;background:#e2e6ec"></div>
<div style="left:451px;top:268px;width:1px;height:19px;background:#e2e6ec"></div>
<div style="left:515px;top:268px;width:1px;height:19px;background:#e2e6ec"></div>
<div style="left:595px;top:268px;width:1px;height:19px;background:#e2e6ec"></div>
<div style="left:739px;top:268px;width:1px;height:19px;background:#e2e6ec"></div>
<div style="left:839px;top:268px;width:1px;height:19px;background:#e2e6ec"></div>
<div style="left:871px;top:268px;width:1px;height:19px;background:#e2e6ec"></div>
<div style="left:894px;top:268px;width:1px;height:19px;background:#e2e6ec"></div>
<div class="t" style="left:390px;top:273.27px;font-size:11.5px;color:#1515e6;">FT</div>
<div class="t" style="left:422px;top:273.27px;font-size:11.5px;color:#1515e6;">01</div>
<div class="t" style="left:113px;width:400px;text-align:right;top:273.27px;font-size:11.5px;color:#1515e6;">1</div>
<div class="t" style="left:518px;top:273.27px;font-size:11.5px;color:#1515e6;">01/03/2021</div>
<div class="t" style="left:598px;top:273.27px;font-size:11.5px;color:#1515e6;">Fatura</div>
<div class="t" style="left:437px;width:400px;text-align:right;top:273.27px;font-size:11.5px;color:#1515e6;">123,00</div>
<div class="t" style="left:897px;top:273.27px;font-size:11.5px;color:#1515e6;">Clie</div>
<div style="left:184px;top:545px;width:330px;height:18px;background:linear-gradient(#f3f4f6,#e1e4e8 50%,#c9cdd3)"></div>
<div style="left:235px;top:545px;width:21px;height:17px;background:#eef0f2"></div>
<div style="left:375px;top:545px;width:17px;height:17px;background:#eef0f2"></div>
<svg style="left:0px;top:545px" width="400" height="18" viewBox="0 0 400 18"><g fill="#222"><rect x="188" y="5.5" width="1.3" height="7"/><path d="M189.5 9 L193.5 5.5 L193.5 12.5 Z" fill="#222"/><path d="M193.5 9 L197.5 5.5 L197.5 12.5 Z" fill="#222"/><path d="M205 9 L209 5.5 L209 12.5 Z" fill="#222"/><path d="M209 9 L213 5.5 L213 12.5 Z" fill="#222"/><path d="M224 9 L228 5.5 L228 12.5 Z" fill="#222"/><path d="M267 9 L263 5.5 L263 12.5 Z" fill="#222"/><path d="M282 9 L278 5.5 L278 12.5 Z" fill="#222"/><path d="M286 9 L282 5.5 L282 12.5 Z" fill="#222"/><path d="M298 9 L294 5.5 L294 12.5 Z" fill="#222"/><path d="M302 9 L298 5.5 L298 12.5 Z" fill="#222"/><rect x="302.5" y="5.5" width="1.3" height="7"/><path d="M310 8.5 Q315 4.5 319 9" stroke="#222" stroke-width="1.8" fill="none"/><path d="M316 9 L322 12.5 L321 6.5 Z"/><g stroke="#222" stroke-width="1.2"><path d="M333 5 V13 M329 9 H337 M330 6 L336 12 M336 6 L330 12"/></g><g stroke="#999" stroke-width="1.1"><path d="M349 5.5 V12.5 M345.5 9 H352.5 M346.5 6.5 L351.5 11.5 M351.5 6.5 L346.5 11.5"/></g><rect x="343" y="4" width="1.2" height="2.5" fill="#999"/><path d="M362 5.5 H371 V7.5 L367.5 10 V13.5 H365.5 V10 L362 7.5 Z"/><path d="M380 9 L385 4.5 L385 13.5 Z" fill="#4c5a7a"/></g></svg>
<div class="t" style="left:237.0px;width:20px;text-align:center;top:549.57px;font-size:11.5px;color:#222;">1</div>
<div style="left:392px;top:545px;width:122px;height:17px;background:linear-gradient(#f6f6f6,#ececec 45%,#d6d6d6 60%,#e4e4e4);border-top:1px solid #a0a0a0;border-bottom:1px solid #a0a0a0"></div>
<div style="left:451px;top:550px;width:1px;height:7px;background:#777"></div>
<div style="left:453px;top:550px;width:1px;height:7px;background:#777"></div>
<div style="left:455px;top:550px;width:1px;height:7px;background:#777"></div>
<div style="left:457px;top:550px;width:1px;height:7px;background:#777"></div>
<div style="left:184px;top:562px;width:737px;height:1px;background:#a0a0a0"></div>
<div style="left:184px;top:563px;width:737px;height:5px;background:#e9e9e9"></div>
<div style="left:184px;top:568px;width:737px;height:1px;background:#8ea4bc"></div>
<div style="left:184px;top:569px;width:737px;height:2px;background:#e9e9e9"></div>
<div style="left:184px;top:571px;width:330px;height:77px;background:#eff0f2"></div>
<div style="left:185px;top:571px;width:1px;height:94px;background:#8c8c8c"></div>
<div style="left:186px;top:571px;width:12px;height:19px;overflow:hidden;background:linear-gradient(#fdfdfd,#f2f2f2 50%,#e0e0e2);border-left:1px solid #7a7a7a;border-bottom:1px solid #6e6e6e;border-top:1px solid #6e6e6e"><div class="t" style="left:2px;top:3.8px;font-size:11.5px;color:#000;-webkit-text-stroke:0.2px #000"></div></div>
<div style="left:198px;top:571px;width:17px;height:19px;overflow:hidden;background:linear-gradient(#fdfdfd,#f2f2f2 50%,#e0e0e2);border-left:1px solid #7a7a7a;border-bottom:1px solid #6e6e6e;border-top:1px solid #6e6e6e"><div class="t" style="left:2px;top:3.8px;font-size:11.5px;color:#000;-webkit-text-stroke:0.2px #000">M</div></div>
<div style="left:215px;top:571px;width:40px;height:19px;overflow:hidden;background:linear-gradient(#fdfdfd,#f2f2f2 50%,#e0e0e2);border-left:1px solid #7a7a7a;border-bottom:1px solid #6e6e6e;border-top:1px solid #6e6e6e"><div class="t" style="left:2px;top:3.8px;font-size:11.5px;color:#000;-webkit-text-stroke:0.2px #000">CAE</div></div>
<div style="left:255px;top:571px;width:20px;height:19px;overflow:hidden;background:linear-gradient(#fdfdfd,#f2f2f2 50%,#e0e0e2);border-left:1px solid #7a7a7a;border-bottom:1px solid #6e6e6e;border-top:1px solid #6e6e6e"><div class="t" style="left:2px;top:3.8px;font-size:11.5px;color:#000;-webkit-text-stroke:0.2px #000">Em</div></div>
<div style="left:275px;top:571px;width:32px;height:19px;overflow:hidden;background:linear-gradient(#fdfdfd,#f2f2f2 50%,#e0e0e2);border-left:1px solid #7a7a7a;border-bottom:1px solid #6e6e6e;border-top:1px solid #6e6e6e"><div class="t" style="left:2px;top:3.8px;font-size:11.5px;color:#000;-webkit-text-stroke:0.2px #000">Tipo</div></div>
<div style="left:307px;top:571px;width:32px;height:19px;overflow:hidden;background:linear-gradient(#fdfdfd,#f2f2f2 50%,#e0e0e2);border-left:1px solid #7a7a7a;border-bottom:1px solid #6e6e6e;border-top:1px solid #6e6e6e"><div class="t" style="left:2px;top:3.8px;font-size:11.5px;color:#000;-webkit-text-stroke:0.2px #000">Série</div></div>
<div style="left:339px;top:571px;width:64px;height:19px;overflow:hidden;background:linear-gradient(#fdfdfd,#f2f2f2 50%,#e0e0e2);border-left:1px solid #7a7a7a;border-bottom:1px solid #6e6e6e;border-top:1px solid #6e6e6e"><div class="t" style="left:2px;top:3.8px;font-size:11.5px;color:#000;-webkit-text-stroke:0.2px #000">Numero</div></div>
<div style="left:403px;top:571px;width:80px;height:19px;overflow:hidden;background:linear-gradient(#fdfdfd,#f2f2f2 50%,#e0e0e2);border-left:1px solid #7a7a7a;border-bottom:1px solid #6e6e6e;border-top:1px solid #6e6e6e"><div class="t" style="left:2px;top:3.8px;font-size:11.5px;color:#000;-webkit-text-stroke:0.2px #000">Data</div></div>
<div style="left:483px;top:571px;width:77px;height:19px;overflow:hidden;background:linear-gradient(#fdfdfd,#f2f2f2 50%,#e0e0e2);border-left:1px solid #7a7a7a;border-bottom:1px solid #6e6e6e;border-top:1px solid #6e6e6e"><div class="t" style="left:2px;top:3.8px;font-size:11.5px;color:#000;-webkit-text-stroke:0.2px #000">Descrição</div></div>
<svg style="left:188px;top:576px" width="9" height="10"><g stroke="#b0b0b0" stroke-width="1"><path d="M4.5 1 V9 M0.5 5 H8.5 M1.5 2 L7.5 8 M7.5 2 L1.5 8"/></g></svg>
<div style="left:198px;top:590px;width:316px;height:17px;background:#fffde6;border-bottom:1px solid #ebe8cf"></div>
<div style="left:186px;top:590px;width:12px;height:18px;background:linear-gradient(#fafafa,#e4e4e4);border:1px solid #8c8c8c;border-top:none"></div>
<svg style="left:188px;top:594px" width="8" height="11"><path d="M2 1.5 L6 5.5 L2 9.5" stroke="#888" stroke-width="1.3" fill="none"/></svg>
<div style="left:215px;top:590px;width:1px;height:17px;background:#ebe8cf"></div>
<div style="left:255px;top:590px;width:1px;height:17px;background:#ebe8cf"></div>
<div style="left:275px;top:590px;width:1px;height:17px;background:#ebe8cf"></div>
<div style="left:307px;top:590px;width:1px;height:17px;background:#ebe8cf"></div>
<div style="left:339px;top:590px;width:1px;height:17px;background:#ebe8cf"></div>
<div style="left:403px;top:590px;width:1px;height:17px;background:#ebe8cf"></div>
<div style="left:483px;top:590px;width:1px;height:17px;background:#ebe8cf"></div>
<div class="t" style="left:278px;top:593.97px;font-size:11.5px;color:#000;">FT</div>
<div class="t" style="left:310px;top:593.97px;font-size:11.5px;color:#000;">01</div>
<div class="t" style="left:1px;width:400px;text-align:right;top:593.97px;font-size:11.5px;color:#000;">2</div>
<div class="t" style="left:406px;top:593.97px;font-size:11.5px;color:#000;">01/03/2021</div>
<div class="t" style="left:486px;top:593.97px;font-size:11.5px;color:#000;">Fatura</div>
<div style="left:186px;top:648px;width:330px;height:18px;background:linear-gradient(#f3f4f6,#e1e4e8 50%,#c9cdd3)"></div>
<div style="left:237px;top:648px;width:21px;height:17px;background:#eef0f2"></div>
<div style="left:377px;top:648px;width:17px;height:17px;background:#eef0f2"></div>
<svg style="left:2px;top:648px" width="400" height="18" viewBox="0 0 400 18"><g fill="#222"><rect x="188" y="5.5" width="1.3" height="7"/><path d="M189.5 9 L193.5 5.5 L193.5 12.5 Z" fill="#222"/><path d="M193.5 9 L197.5 5.5 L197.5 12.5 Z" fill="#222"/><path d="M205 9 L209 5.5 L209 12.5 Z" fill="#222"/><path d="M209 9 L213 5.5 L213 12.5 Z" fill="#222"/><path d="M224 9 L228 5.5 L228 12.5 Z" fill="#222"/><path d="M267 9 L263 5.5 L263 12.5 Z" fill="#222"/><path d="M282 9 L278 5.5 L278 12.5 Z" fill="#222"/><path d="M286 9 L282 5.5 L282 12.5 Z" fill="#222"/><path d="M298 9 L294 5.5 L294 12.5 Z" fill="#222"/><path d="M302 9 L298 5.5 L298 12.5 Z" fill="#222"/><rect x="302.5" y="5.5" width="1.3" height="7"/><path d="M310 8.5 Q315 4.5 319 9" stroke="#222" stroke-width="1.8" fill="none"/><path d="M316 9 L322 12.5 L321 6.5 Z"/><g stroke="#222" stroke-width="1.2"><path d="M333 5 V13 M329 9 H337 M330 6 L336 12 M336 6 L330 12"/></g><g stroke="#999" stroke-width="1.1"><path d="M349 5.5 V12.5 M345.5 9 H352.5 M346.5 6.5 L351.5 11.5 M351.5 6.5 L346.5 11.5"/></g><rect x="343" y="4" width="1.2" height="2.5" fill="#999"/><path d="M362 5.5 H371 V7.5 L367.5 10 V13.5 H365.5 V10 L362 7.5 Z"/><path d="M380 9 L385 4.5 L385 13.5 Z" fill="#4c5a7a"/></g></svg>
<div class="t" style="left:239.0px;width:20px;text-align:center;top:652.57px;font-size:11.5px;color:#222;">1</div>
<div style="left:394px;top:648px;width:122px;height:17px;background:linear-gradient(#f6f6f6,#ececec 45%,#d6d6d6 60%,#e4e4e4);border-top:1px solid #a0a0a0;border-bottom:1px solid #a0a0a0"></div>
<div style="left:453px;top:653px;width:1px;height:7px;background:#777"></div>
<div style="left:455px;top:653px;width:1px;height:7px;background:#777"></div>
<div style="left:457px;top:653px;width:1px;height:7px;background:#777"></div>
<div style="left:459px;top:653px;width:1px;height:7px;background:#777"></div>
<div style="left:184px;top:665px;width:330px;height:1px;background:#a0a0a0"></div>
<div style="left:186px;top:669px;width:20px;height:15px;border:1px solid #7a7a7a;border-radius:3px;box-sizing:border-box;background:linear-gradient(#fdfdfd,#f3f5f7 40%,#dde2e8 60%,#e9ecef);"></div>
<div class="t" style="left:166.0px;width:60px;text-align:center;top:671.07px;font-size:11.5px;color:#111;">-</div>
<div style="left:208px;top:669px;width:20px;height:15px;border:1px solid #7a7a7a;border-radius:3px;box-sizing:border-box;background:linear-gradient(#fdfdfd,#f3f5f7 40%,#dde2e8 60%,#e9ecef);"></div>
<div class="t" style="left:188.0px;width:60px;text-align:center;top:671.07px;font-size:11.5px;color:#111;">+</div>
<div style="left:230px;top:670px;width:144px;height:16px;background:#ff0000"></div>
<div class="t" style="left:222.0px;width:160px;text-align:center;top:672.77px;font-size:11.5px;color:#fff;letter-spacing:-0.4px;-webkit-text-stroke:0">Documentos pendentes</div>
<div style="left:186px;top:686px;width:17px;height:17px;border:1px solid #b8b8b8;border-radius:3px;box-sizing:border-box;background:linear-gradient(#fdfdfd,#f3f5f7 40%,#dde2e8 60%,#e9ecef);"></div>
<div class="t" style="left:166.0px;width:57px;text-align:center;top:689.07px;font-size:11.5px;color:#9a9a9a;">P</div>
<div class="t" style="left:381px;top:680.77px;font-size:11.5px;color:#000;">por imprimir</div>
<div style="left:448px;top:670px;width:82px;height:24px;border:1px solid #b8b8b8;border-radius:3px;box-sizing:border-box;background:linear-gradient(#fdfdfd,#f3f5f7 40%,#dde2e8 60%,#e9ecef);"></div>
<div class="t" style="left:455px;top:677.27px;font-size:11.5px;color:#9a9a9a;">Hist. emissões</div>
<div class="t" style="left:189px;top:710.27px;font-size:11.5px;color:#000;">1 : 1</div>
<div style="left:260px;top:696px;width:88px;height:25px;border:1px solid #7a7a7a;border-radius:3px;box-sizing:border-box;background:linear-gradient(#fdfdfd,#f3f5f7 40%,#dde2e8 60%,#e9ecef);"></div>
<div class="t" style="left:240.0px;width:128px;text-align:center;top:703.07px;font-size:11.5px;color:#111;"><u>L</u>ocalizar</div>
<div style="left:354px;top:696px;width:87px;height:25px;border:1px solid #b8b8b8;border-radius:3px;box-sizing:border-box;background:linear-gradient(#fdfdfd,#f3f5f7 40%,#dde2e8 60%,#e9ecef);"></div>
<div class="t" style="left:334.0px;width:127px;text-align:center;top:703.07px;font-size:11.5px;color:#9a9a9a;"><u>N</u>ovo</div>
<div style="left:447px;top:696px;width:88px;height:25px;border:1px solid #7a7a7a;border-radius:3px;box-sizing:border-box;background:linear-gradient(#fdfdfd,#f3f5f7 40%,#dde2e8 60%,#e9ecef);"></div>
<div class="t" style="left:427.0px;width:128px;text-align:center;top:703.07px;font-size:11.5px;color:#111;"><u>E</u>ditar</div>
<div style="left:508px;top:291px;width:780px;height:540px;background:#2b2d30"></div>
<div style="left:508px;top:291px;width:780px;height:28px;background:linear-gradient(#474d58,#454b56 8px,#2f2f2f 10px,#353535 18px,#474747 27px)"></div>
<div style="left:508px;top:318px;width:780px;height:1px;background:#222"></div>
<svg style="left:513px;top:297px" width="16" height="16" viewBox="0 0 16 16"><path d="M1.5 3 Q1 0.5 4 0.8 L12.5 0.5 Q15 0.5 15 3 L15.5 13 Q15.5 15.5 13 15.3 L4 15.5 Q1.5 15.5 1.5 13 Z" fill="#f5b01a"/><path d="M3 0.8 L10.5 0.6 L13 15.3 L5.5 15.5 Z" fill="#e8620f"/><path d="M4.5 8.3 L10.3 4.8 L10.5 12 Z" fill="none" stroke="#1a1a1a" stroke-width="1.5" stroke-linejoin="round"/></svg>
<div class="t" style="left:533px;top:299.57px;font-size:11.5px;color:#f6f6f6;">Editar - Fatura 01-2 (Pendente)</div>
<div style="left:1220px;top:307px;width:8px;height:2px;background:#c5cad2"></div>
<div style="left:1244px;top:302px;width:10px;height:8px;border:1.5px solid #c5cad2;border-top-width:3px"></div>
<svg style="left:1268px;top:300px" width="11" height="10"><path d="M1.5 1.5 L9.5 8.5 M9.5 1.5 L1.5 8.5" stroke="#c5cad2" stroke-width="2.2"/></svg>
<div style="left:511px;top:319px;width:774px;height:509px;background:#e9e9e9;border-left:1px solid #8ea4bc;border-top:1px solid #8ea4bc"></div>
<div class="t" style="left:388.5px;width:200px;text-align:right;top:331.27px;font-size:11.5px;color:#000;">Documento</div>
<div style="left:593px;top:327px;width:30px;height:19px;background:#fffde3;border:1px solid #a3a3a3;box-sizing:border-box;"></div>
<div class="t" style="left:596px;top:330.87px;font-size:11.5px;color:#000;">FT</div>
<div style="left:625px;top:327px;width:30px;height:19px;background:#fffde3;border:1px solid #a3a3a3;box-sizing:border-box;"></div>
<div class="t" style="left:628px;top:330.87px;font-size:11.5px;color:#000;">01</div>
<div style="left:658px;top:327px;width:152px;height:19px;background:#fff;border:1px solid #a3a3a3;box-sizing:border-box;"></div>
<div class="t" style="left:661px;top:330.87px;font-size:11.5px;color:#000;">Fatura (P)</div>
<div style="left:813px;top:327px;width:90px;height:19px;background:#fffde3;border:1px solid #a3a3a3;box-sizing:border-box;"></div>
<div class="t" style="left:498px;width:400px;text-align:right;top:330.87px;font-size:11.5px;color:#000;">2</div>
<div class="t" style="left:909.5px;top:331.67px;font-size:11.5px;color:#000;font-weight:bold">Editar</div>
<div class="t" style="left:977px;top:331.27px;font-size:11.5px;color:#000;">1 : 1</div>
<div style="left:1015px;top:327px;width:86px;height:19px;background:#fff;border:1px solid #a3a3a3;box-sizing:border-box;"></div>
<div class="t" style="left:1018px;top:331.77px;font-size:11.5px;color:#000;">01/03/2021</div>
<div style="left:1087px;top:335px;width:0;height:0;border-left:3px solid transparent;border-right:3px solid transparent;border-top:3px solid #222;"></div>
<div style="left:1120px;top:327px;width:30px;height:19px;background:#fffde3;border:1px solid #a3a3a3;box-sizing:border-box;"></div>
<div style="left:1161px;top:327px;width:90px;height:19px;background:#fffde3;border:1px solid #a3a3a3;box-sizing:border-box;"></div>
<div class="t" style="left:517px;top:353.27px;font-size:11.5px;color:#000;">PT</div>
<div style="left:534px;top:348px;width:55px;height:21px;border:1px solid #7a7a7a;border-radius:3px;box-sizing:border-box;background:linear-gradient(#fdfdfd,#f3f5f7 40%,#dde2e8 60%,#e9ecef);"></div>
<div class="t" style="left:514.0px;width:95px;text-align:center;top:353.07px;font-size:11.5px;color:#111;">Te<u>r</u>ceiro</div>
<div style="left:593px;top:349px;width:106px;height:19px;background:#fff;border:1px solid #a3a3a3;box-sizing:border-box;"></div>
<div class="t" style="left:596px;top:353.77px;font-size:11.5px;color:#000;">Clientes</div>
<div style="left:685px;top:357px;width:0;height:0;border-left:3px solid transparent;border-right:3px solid transparent;border-top:3px solid #222;"></div>
<div style="left:595px;top:351px;width:86px;height:15px;border:1px dotted #111"></div>
<div style="left:704px;top:349px;width:78px;height:19px;background:#fff;border:1px solid #a3a3a3;box-sizing:border-box;"></div>
<div class="t" style="left:362px;width:400px;text-align:right;top:353.77px;font-size:11.5px;color:#000;">99999</div>
<div style="left:768px;top:357px;width:0;height:0;border-left:3px solid transparent;border-right:3px solid transparent;border-top:3px solid #222;"></div>
<div class="t" style="left:812px;top:353.27px;font-size:11.5px;color:#000;">NIF</div>
<div style="left:832px;top:349px;width:47px;height:19px;background:#fff;border:1px solid #a3a3a3;box-sizing:border-box;"></div>
<div class="t" style="left:835px;top:353.77px;font-size:11.5px;color:#000;">PT</div>
<div style="left:865px;top:357px;width:0;height:0;border-left:3px solid transparent;border-right:3px solid transparent;border-top:3px solid #222;"></div>
<div style="left:880px;top:349px;width:78px;height:19px;background:#fff;border:1px solid #a3a3a3;box-sizing:border-box;"></div>
<div class="t" style="left:883px;top:352.87px;font-size:11.5px;color:#000;">999999990</div>
<div class="t" style="left:835px;width:200px;text-align:right;top:353.27px;font-size:11.5px;color:#000;">Vendedor</div>
<div style="left:1039px;top:350px;width:62px;height:19px;background:#fff;border:1px solid #a3a3a3;box-sizing:border-box;"></div>
<div style="left:1087px;top:358px;width:0;height:0;border-left:3px solid transparent;border-right:3px solid transparent;border-top:3px solid #222;"></div>
<div class="t" style="left:1118px;top:354.27px;font-size:11.5px;color:#000;">Processo</div>
<div style="left:1167px;top:350px;width:84px;height:19px;background:#fff;border:1px solid #a3a3a3;box-sizing:border-box;"></div>
<div style="left:1237px;top:358px;width:0;height:0;border-left:3px solid transparent;border-right:3px solid transparent;border-top:3px solid #222;"></div>
<div class="t" style="left:388.5px;width:200px;text-align:right;top:375.27px;font-size:11.5px;color:#000;">C.Cliente</div>
<div style="left:592px;top:371px;width:108px;height:19px;background:#fff;border:1px solid #a3a3a3;box-sizing:border-box;"></div>
<div class="t" style="left:700.5px;top:375.77px;font-size:11.5px;color:#000;">Tipo Fatura</div>
<div style="left:763px;top:371px;width:64px;height:19px;background:#fffde3;border:1px solid #a3a3a3;overflow:hidden"><div class="t" style="left:2px;top:3.3px;font-size:11.5px;color:#000;-webkit-text-stroke:0.2px #000;width:40px;overflow:hidden">a crédito</div></div>
<div style="left:812px;top:379px;width:0;height:0;border-left:3px solid transparent;border-right:3px solid transparent;border-top:3px solid #9a9a9a;"></div>
<div style="left:832px;top:375px;width:12px;height:12px;border:1px solid #8e8e8e;background:linear-gradient(135deg,#dcdcdc,#fafafa)"></div>
<div class="t" style="left:848.5px;top:375.77px;font-size:11.5px;color:#000;">Suj.passivo IVA</div>
<div class="t" style="left:835px;width:200px;text-align:right;top:375.27px;font-size:11.5px;color:#000;">Pagamento</div>
<div style="left:1039px;top:371px;width:62px;height:19px;background:#fff;border:1px solid #a3a3a3;box-sizing:border-box;"></div>
<div style="left:1087px;top:379px;width:0;height:0;border-left:3px solid transparent;border-right:3px solid transparent;border-top:3px solid #222;"></div>
<div class="t" style="left:388.5px;width:200px;text-align:right;top:396.77px;font-size:11.5px;color:#000;">Nome</div>
<div style="left:593px;top:393px;width:365px;height:19px;background:#fff;border:1px solid #a3a3a3;box-sizing:border-box;"></div>
<div class="t" style="left:596px;top:396.87px;font-size:11.5px;color:#000;">Consumidor Final</div>
<div class="t" style="left:835px;width:200px;text-align:right;top:397.27px;font-size:11.5px;color:#000;">Vencimento</div>
<div style="left:1039px;top:393px;width:76px;height:19px;background:#fff;border:1px solid #a3a3a3;box-sizing:border-box;"></div>
<div class="t" style="left:1042px;top:397.77px;font-size:11.5px;color:#000;">01/03/2021</div>
<div style="left:1101px;top:401px;width:0;height:0;border-left:3px solid transparent;border-right:3px solid transparent;border-top:3px solid #222;"></div>
<div style="left:1124px;top:397px;width:12px;height:12px;border:1px solid #8e8e8e;background:linear-gradient(135deg,#dcdcdc,#fafafa)"></div>
<div class="t" style="left:1140.5px;top:398.57px;font-size:11.5px;color:#000;">Ret.IRS</div>
<div style="left:1187px;top:393px;width:65px;height:19px;background:#fff;border:1px solid #a3a3a3;box-sizing:border-box;"></div>
<div style="left:534px;top:414px;width:55px;height:21px;border:1px solid #7a7a7a;border-radius:3px;box-sizing:border-box;background:linear-gradient(#fdfdfd,#f3f5f7 40%,#dde2e8 60%,#e9ecef);"></div>
<div class="t" style="left:514.0px;width:95px;text-align:center;top:419.07px;font-size:11.5px;color:#111;"><u>M</u>orada</div>
<div style="left:593px;top:415px;width:365px;height:19px;background:#fff;border:1px solid #a3a3a3;box-sizing:border-box;"></div>
<div class="t" style="left:835px;width:200px;text-align:right;top:419.27px;font-size:11.5px;color:#000;">% Desconto</div>
<div style="left:1039px;top:415px;width:76px;height:19px;background:#fff;border:1px solid #a3a3a3;box-sizing:border-box;"></div>
<div class="t" style="left:710px;width:400px;text-align:right;top:418.87px;font-size:11.5px;color:#000;">0,00%</div>
<div class="t" style="left:388.5px;width:200px;text-align:right;top:442.27px;font-size:11.5px;color:#000;">Localidade</div>
<div style="left:593px;top:437px;width:365px;height:19px;background:#fff;border:1px solid #a3a3a3;box-sizing:border-box;"></div>
<div class="t" style="left:835px;width:200px;text-align:right;top:441.27px;font-size:11.5px;color:#000;">IVA Incl.</div>
<div style="left:1039px;top:438px;width:76px;height:18px;background:#fff;border:1px solid #a3a3a3;box-sizing:border-box;"></div>
<div class="t" style="left:1042px;top:442.77px;font-size:11.5px;color:#000;">Não</div>
<div style="left:1101px;top:446px;width:0;height:0;border-left:3px solid transparent;border-right:3px solid transparent;border-top:3px solid #222;"></div>
<div class="t" style="left:1119px;top:441.27px;font-size:11.5px;color:#000;">Divisa</div>
<div style="left:1152px;top:438px;width:44px;height:18px;background:#fff;border:1px solid #a3a3a3;box-sizing:border-box;"></div>
<div style="left:1182px;top:446px;width:0;height:0;border-left:3px solid transparent;border-right:3px solid transparent;border-top:3px solid #222;"></div>
<div style="left:1199px;top:438px;width:53px;height:18px;background:#fffde3;border:1px solid #a3a3a3;box-sizing:border-box;"></div>
<div class="t" style="left:847px;width:400px;text-align:right;top:441.87px;font-size:11.5px;color:#000;">0,00000</div>
<div class="t" style="left:517.6px;top:464.27px;font-size:11.5px;color:#000;">Código Postal</div>
<div style="left:593px;top:459px;width:181px;height:19px;background:#fff;border:1px solid #a3a3a3;box-sizing:border-box;"></div>
<div class="t" style="left:785px;top:464.27px;font-size:11.5px;color:#000;">País</div>
<div style="left:812px;top:459px;width:146px;height:19px;background:#fff;border:1px solid #a3a3a3;box-sizing:border-box;"></div>
<div class="t" style="left:835px;width:200px;text-align:right;top:464.27px;font-size:11.5px;color:#000;">Mod. Pagam.</div>
<div style="left:1039px;top:459px;width:145px;height:19px;background:#fff;border:1px solid #a3a3a3;box-sizing:border-box;"></div>
<div class="t" style="left:1042px;top:463.77px;font-size:11.5px;color:#000;">0 - Numerário</div>
<div style="left:1170px;top:467px;width:0;height:0;border-left:3px solid transparent;border-right:3px solid transparent;border-top:3px solid #222;"></div>
<div style="left:511px;top:482px;width:774px;height:2px;background:#4e5660"></div>
<div style="left:511px;top:484px;width:774px;height:94px;background:#eeeeee"></div>
<div style="left:526px;top:486px;width:736px;height:35px;background:#fff;border-bottom:1px solid #c4c4c4"></div>
<div style="left:515px;top:486px;width:11px;height:34px;background:#fff"></div>
<div style="left:515px;top:487px;width:11px;height:16px;background:#dedede;border:1px solid #b4b4b4"></div>
<svg style="left:517px;top:505px" width="9" height="13"><path d="M1 1 L7.5 6.5 L1 12 Z" fill="#111"/></svg>
<div style="left:526px;top:486px;width:1px;height:35px;background:#c4c4c4"></div>
<div style="left:627px;top:486px;width:1px;height:35px;background:#c4c4c4"></div>
<div style="left:1070px;top:486px;width:1px;height:35px;background:#c4c4c4"></div>
<div style="left:1135px;top:486px;width:1px;height:35px;background:#c4c4c4"></div>
<div style="left:1158px;top:486px;width:1px;height:35px;background:#c4c4c4"></div>
<div style="left:1223px;top:486px;width:1px;height:35px;background:#c4c4c4"></div>
<div style="left:1262px;top:486px;width:1px;height:35px;background:#c4c4c4"></div>
<div class="t" style="left:527.0px;width:100px;text-align:center;top:490.27px;font-size:11.5px;color:#000;">Código</div>
<div class="t" style="left:749.0px;width:200px;text-align:center;top:490.27px;font-size:11.5px;color:#000;">Descrição</div>
<div class="t" style="left:1073.0px;width:60px;text-align:center;top:490.27px;font-size:11.5px;color:#000;">Qtd</div>
<div class="t" style="left:1138px;top:490.27px;font-size:11.5px;color:#000;">Un.</div>
<div class="t" style="left:1160.0px;width:60px;text-align:center;top:490.27px;font-size:11.5px;color:#000;">Preço</div>
<div class="t" style="left:1225px;top:490.27px;font-size:11.5px;color:#000;">%Desc</div>
<div class="t" style="left:630px;top:508.27px;font-size:11.5px;color:#000;">Serviço de consultoria referente ao mês de Janeiro 2021</div>
<div class="t" style="left:733px;width:400px;text-align:right;top:508.27px;font-size:11.5px;color:#000;">12,00</div>
<div class="t" style="left:1138px;top:508.27px;font-size:11.5px;color:#000;">H</div>
<div class="t" style="left:821px;width:400px;text-align:right;top:508.27px;font-size:11.5px;color:#000;">50,00</div>
<div style="left:1265px;top:486px;width:16px;height:91px;background:#eeeeee"></div>
<div style="left:1266px;top:503px;width:14px;height:57px;background:#cdcdcd"></div>
<svg style="left:1267px;top:490px" width="12" height="84"><path d="M2.5 7.5 L6 4 L9.5 7.5" stroke="#333" stroke-width="1.4" fill="none"/><path d="M2.5 75 L6 78.5 L9.5 75" stroke="#333" stroke-width="1.4" fill="none"/></svg>
<div style="left:511px;top:578px;width:774px;height:2px;background:#4e5660"></div>
<div style="left:514px;top:604px;width:518px;height:191px;background:#e9e9e9;border:1px solid #8aa0b8"></div>
<div style="left:517.5px;top:583px;width:44.5px;height:21px;background:linear-gradient(#f0f3f8,#e3e8ef 45%,#d3d9e1 55%,#e2e6ec);border:1px solid #6e6e6e;border-bottom:none;border-radius:2px 2px 0 0"></div>
<div class="t" style="left:439.75px;width:200px;text-align:center;top:590.77px;font-size:11.5px;color:#333;">Serviço</div>
<div style="left:654px;top:583px;width:69px;height:21px;background:linear-gradient(#f0f3f8,#e3e8ef 45%,#d3d9e1 55%,#e2e6ec);border:1px solid #6e6e6e;border-bottom:none;border-radius:2px 2px 0 0"></div>
<div class="t" style="left:588.5px;width:200px;text-align:center;top:590.77px;font-size:11.5px;color:#333;">Documento</div>
<div style="left:724.5px;top:583px;width:36.5px;height:21px;background:linear-gradient(#f0f3f8,#e3e8ef 45%,#d3d9e1 55%,#e2e6ec);border:1px solid #6e6e6e;border-bottom:none;border-radius:2px 2px 0 0"></div>
<div class="t" style="left:642.75px;width:200px;text-align:center;top:590.77px;font-size:11.5px;color:#333;">Linha</div>
<div style="left:762.5px;top:583px;width:55.5px;height:21px;background:linear-gradient(#f0f3f8,#e3e8ef 45%,#d3d9e1 55%,#e2e6ec);border:1px solid #6e6e6e;border-bottom:none;border-radius:2px 2px 0 0"></div>
<div class="t" style="left:690.25px;width:200px;text-align:center;top:590.77px;font-size:11.5px;color:#333;">Impostos</div>
<div style="left:563.5px;top:581px;width:89.5px;height:24px;background:#e9e9e9;border:1px solid #7a7a7a;border-bottom:none;border-radius:2px 2px 0 0;z-index:2"></div>
<div class="t" style="left:508.25px;width:200px;text-align:center;top:589.27px;font-size:11.5px;color:#000;z-index:3">Carga/Descarga</div>
<div class="t" style="left:382.6px;width:200px;text-align:right;top:614.87px;font-size:11.5px;color:#000;">Expedição</div>
<div style="left:593px;top:611px;width:258px;height:19px;background:#fff;border:1px solid #a3a3a3;box-sizing:border-box;"></div>
<div class="t" style="left:385.6px;width:200px;text-align:right;top:637.07px;font-size:11.5px;color:#000;">Carga em</div>
<div style="left:593px;top:633px;width:258px;height:19px;background:#fff;border:1px solid #a3a3a3;box-sizing:border-box;"></div>
<div class="t" style="left:596px;top:636.87px;font-size:11.5px;color:#000;">RUA DOS PETIGAIS</div>
<div class="t" style="left:385.6px;width:200px;text-align:right;top:659.07px;font-size:11.5px;color:#000;">Localidade</div>
<div style="left:593px;top:655px;width:258px;height:19px;background:#fff;border:1px solid #a3a3a3;box-sizing:border-box;"></div>
<div class="t" style="left:596px;top:658.87px;font-size:11.5px;color:#000;">BAROSA</div>
<div class="t" style="left:385.6px;width:200px;text-align:right;top:681.07px;font-size:11.5px;color:#000;">Postal</div>
<div style="left:593px;top:677px;width:258px;height:19px;background:#fff;border:1px solid #a3a3a3;box-sizing:border-box;"></div>
<div class="t" style="left:596px;top:680.87px;font-size:11.5px;color:#000;">2401-801 LEIRIA</div>
<div style="left:519px;top:697px;width:70px;height:21px;border:1px solid #7a7a7a;border-radius:3px;box-sizing:border-box;background:linear-gradient(#fdfdfd,#f3f5f7 40%,#dde2e8 60%,#e9ecef);"></div>
<div class="t" style="left:499.0px;width:110px;text-align:center;top:702.07px;font-size:11.5px;color:#111;"><u>D</u>escarga em</div>
<div style="left:593px;top:700px;width:258px;height:19px;background:#fff;border:1px solid #a3a3a3;box-sizing:border-box;"></div>
<div class="t" style="left:385.6px;width:200px;text-align:right;top:726.07px;font-size:11.5px;color:#000;">Localidade</div>
<div style="left:593px;top:722px;width:258px;height:19px;background:#fff;border:1px solid #a3a3a3;box-sizing:border-box;"></div>
<div class="t" style="left:385.6px;width:200px;text-align:right;top:748.07px;font-size:11.5px;color:#000;">Postal</div>
<div style="left:593px;top:744px;width:258px;height:19px;background:#fff;border:1px solid #a3a3a3;box-sizing:border-box;"></div>
<div style="left:521px;top:764px;width:70px;height:21px;border:1px solid #7a7a7a;border-radius:3px;box-sizing:border-box;background:linear-gradient(#fdfdfd,#f3f5f7 40%,#dde2e8 60%,#e9ecef);"></div>
<div class="t" style="left:501.0px;width:110px;text-align:center;top:769.07px;font-size:11.5px;color:#111;"><u>O</u>bservações</div>
<div style="left:593px;top:766px;width:258px;height:19px;background:#fff;border:1px solid #a3a3a3;box-sizing:border-box;"></div>
<div class="t" style="left:854.6px;top:614.87px;font-size:11.5px;color:#000;">Portes</div>
<div style="left:889px;top:611px;width:60px;height:19px;background:#fff;border:1px solid #a3a3a3;box-sizing:border-box;"></div>
<div class="t" style="left:544px;width:400px;text-align:right;top:614.87px;font-size:11.5px;color:#000;">0,00</div>
<div class="t" style="left:957.7px;top:615.77px;font-size:11.5px;color:#000;">Iva</div>
<div style="left:976px;top:611px;width:32px;height:19px;background:#fff;border:1px solid #a3a3a3;box-sizing:border-box;"></div>
<div class="t" style="left:603px;width:400px;text-align:right;top:614.27px;font-size:11.5px;color:#444;">···</div>
<div style="left:1012px;top:611px;width:12px;height:19px;background:#fff;border:1px solid #a3a3a3;box-sizing:border-box;"></div>
<div class="t" style="left:1015px;top:614.87px;font-size:11.5px;color:#000;">N</div>
<div style="left:858px;top:633px;width:83px;height:19px;background:#fff;border:1px solid #a3a3a3;box-sizing:border-box;"></div>
<div class="t" style="left:861px;top:637.77px;font-size:11.5px;color:#000;">&nbsp;/&nbsp;&nbsp;/</div>
<div style="left:927px;top:641px;width:0;height:0;border-left:3px solid transparent;border-right:3px solid transparent;border-top:3px solid #222;"></div>
<div style="left:954px;top:633px;width:70px;height:19px;background:#fff;border:1px solid #a3a3a3;box-sizing:border-box;"></div>
<svg style="left:1011px;top:636px" width="9" height="13"><path d="M1 5 L4.5 1.5 L8 5 Z M1 8 L4.5 11.5 L8 8 Z" fill="#222"/></svg>
<div class="t" style="left:887px;top:659.07px;font-size:11.5px;color:#000;">ATDoc</div>
<div style="left:924px;top:655px;width:100px;height:19px;background:#fffde3;border:1px solid #a3a3a3;box-sizing:border-box;"></div>
<div class="t" style="left:854.6px;top:681.07px;font-size:11.5px;color:#000;">País</div>
<div style="left:879px;top:677px;width:47px;height:19px;background:#fff;border:1px solid #a3a3a3;box-sizing:border-box;"></div>
<div class="t" style="left:882px;top:681.77px;font-size:11.5px;color:#000;">PT</div>
<div style="left:912px;top:685px;width:0;height:0;border-left:3px solid transparent;border-right:3px solid transparent;border-top:3px solid #222;"></div>
<div style="left:930px;top:677px;width:94px;height:19px;background:#fff;border:1px solid #a3a3a3;box-sizing:border-box;"></div>
<div style="left:858px;top:700px;width:83px;height:19px;background:#fff;border:1px solid #a3a3a3;box-sizing:border-box;"></div>
<div class="t" style="left:861px;top:704.77px;font-size:11.5px;color:#000;">&nbsp;/&nbsp;&nbsp;/</div>
<div style="left:927px;top:708px;width:0;height:0;border-left:3px solid transparent;border-right:3px solid transparent;border-top:3px solid #222;"></div>
<div style="left:954px;top:700px;width:70px;height:19px;background:#fff;border:1px solid #a3a3a3;box-sizing:border-box;"></div>
<svg style="left:1011px;top:703px" width="9" height="13"><path d="M1 5 L4.5 1.5 L8 5 Z M1 8 L4.5 11.5 L8 8 Z" fill="#222"/></svg>
<div class="t" style="left:864px;top:726.07px;font-size:11.5px;color:#000;">ID</div>
<div style="left:879px;top:722px;width:36px;height:19px;background:#fffde3;border:1px solid #a3a3a3;box-sizing:border-box;"></div>
<div class="t" style="left:854.6px;top:748.07px;font-size:11.5px;color:#000;">País</div>
<div style="left:879px;top:744px;width:47px;height:19px;background:#fff;border:1px solid #a3a3a3;box-sizing:border-box;"></div>
<div style="left:912px;top:752px;width:0;height:0;border-left:3px solid transparent;border-right:3px solid transparent;border-top:3px solid #222;"></div>
<div style="left:930px;top:744px;width:94px;height:19px;background:#fff;border:1px solid #a3a3a3;box-sizing:border-box;"></div>
<div style="left:1036px;top:582px;width:222px;height:213px;background:#e9e9e9;border:1px solid #8aa0b8"></div>
<div class="t" style="left:930px;width:200px;text-align:right;top:595.07px;font-size:11.5px;color:#000;">PVP1 Ilíquido</div>
<div style="left:1134px;top:589px;width:118px;height:19px;background:#fffde3;border:1px solid #a3a3a3;box-sizing:border-box;"></div>
<div class="t" style="left:847px;width:400px;text-align:right;top:592.87px;font-size:11.5px;color:#000;">600,00</div>
<div class="t" style="left:930px;width:200px;text-align:right;top:616.07px;font-size:11.5px;color:#000;">Descontos linha</div>
<div style="left:1134px;top:611px;width:118px;height:19px;background:#fffde3;border:1px solid #a3a3a3;box-sizing:border-box;"></div>
<div class="t" style="left:847px;width:400px;text-align:right;top:614.87px;font-size:11.5px;color:#000;">0,00</div>
<div class="t" style="left:930px;width:200px;text-align:right;top:638.07px;font-size:11.5px;color:#000;">Desc. comercial</div>
<div style="left:1134px;top:633px;width:118px;height:19px;background:#fffde3;border:1px solid #a3a3a3;box-sizing:border-box;"></div>
<div class="t" style="left:847px;width:400px;text-align:right;top:636.87px;font-size:11.5px;color:#000;">0,00</div>
<div class="t" style="left:930px;width:200px;text-align:right;top:660.07px;font-size:11.5px;color:#000;">Serviços</div>
<div style="left:1134px;top:655px;width:118px;height:19px;background:#fffde3;border:1px solid #a3a3a3;box-sizing:border-box;"></div>
<div class="t" style="left:847px;width:400px;text-align:right;top:658.87px;font-size:11.5px;color:#000;">600,00</div>
<div class="t" style="left:930px;width:200px;text-align:right;top:682.07px;font-size:11.5px;color:#000;">Mercadorias</div>
<div style="left:1134px;top:677px;width:118px;height:19px;background:#fffde3;border:1px solid #a3a3a3;box-sizing:border-box;"></div>
<div class="t" style="left:847px;width:400px;text-align:right;top:680.87px;font-size:11.5px;color:#000;">0,00</div>
<div class="t" style="left:930px;width:200px;text-align:right;top:725.77px;font-size:11.5px;color:#000;">Incidente</div>
<div style="left:1134px;top:721px;width:118px;height:19px;background:#fffde3;border:1px solid #a3a3a3;box-sizing:border-box;"></div>
<div class="t" style="left:847px;width:400px;text-align:right;top:724.87px;font-size:11.5px;color:#000;">600,00</div>
<div class="t" style="left:930px;width:200px;text-align:right;top:747.57px;font-size:11.5px;color:#000;">Iva</div>
<div style="left:1134px;top:743px;width:118px;height:19px;background:#fffde3;border:1px solid #a3a3a3;box-sizing:border-box;"></div>
<div class="t" style="left:847px;width:400px;text-align:right;top:746.87px;font-size:11.5px;color:#000;">138,00</div>
<div class="t" style="left:930px;width:200px;text-align:right;top:703.87px;font-size:11.5px;color:#000;">Imp.Espec/Portes</div>
<div style="left:1134px;top:699px;width:58px;height:19px;background:#fffde3;border:1px solid #a3a3a3;box-sizing:border-box;"></div>
<div class="t" style="left:787px;width:400px;text-align:right;top:702.87px;font-size:11.5px;color:#000;">0,00</div>
<div style="left:1195px;top:699px;width:57px;height:19px;background:#fffde3;border:1px solid #a3a3a3;box-sizing:border-box;"></div>
<div class="t" style="left:847px;width:400px;text-align:right;top:702.87px;font-size:11.5px;color:#000;">0,00</div>
<div class="t" style="left:930px;width:200px;text-align:right;top:771.57px;font-size:11.5px;color:#000;">TOTAL</div>
<div style="left:1134px;top:767px;width:118px;height:19px;background:#eef7fd;border:1px solid #a3a3a3;box-sizing:border-box;"></div>
<div class="t" style="left:847px;width:400px;text-align:right;top:770.87px;font-size:11.5px;color:#000;font-weight:bold;">738,00</div>
<div style="left:515px;top:796px;width:21px;height:16px;border:1px solid #7a7a7a;border-radius:3px;box-sizing:border-box;background:linear-gradient(#fdfdfd,#f3f5f7 40%,#dde2e8 60%,#e9ecef);"></div>
<div class="t" style="left:495.0px;width:61px;text-align:center;top:798.57px;font-size:11.5px;color:#111;">-</div>
<div style="left:538px;top:796px;width:21px;height:16px;border:1px solid #7a7a7a;border-radius:3px;box-sizing:border-box;background:linear-gradient(#fdfdfd,#f3f5f7 40%,#dde2e8 60%,#e9ecef);"></div>
<div class="t" style="left:518.0px;width:61px;text-align:center;top:798.57px;font-size:11.5px;color:#111;">+</div>
<div style="left:745px;top:796px;width:80px;height:25px;border:1px solid #7a7a7a;border-radius:3px;box-sizing:border-box;background:linear-gradient(#fdfdfd,#f3f5f7 40%,#dde2e8 60%,#e9ecef);"></div>
<div class="t" style="left:725.0px;width:120px;text-align:center;top:803.07px;font-size:11.5px;color:#111;">Adiantamentos</div>
<div style="left:830px;top:796px;width:81px;height:25px;border:1px solid #b8b8b8;border-radius:3px;box-sizing:border-box;background:linear-gradient(#fdfdfd,#f3f5f7 40%,#dde2e8 60%,#e9ecef);"></div>
<div class="t" style="left:810.0px;width:121px;text-align:center;top:803.07px;font-size:11.5px;color:#9a9a9a;"><u>P</u>agamento</div>
<div style="left:916px;top:796px;width:80px;height:25px;border:1px solid #7a7a7a;border-radius:3px;box-sizing:border-box;background:linear-gradient(#fdfdfd,#f3f5f7 40%,#dde2e8 60%,#e9ecef);"></div>
<div class="t" style="left:896.0px;width:120px;text-align:center;top:803.07px;font-size:11.5px;color:#111;">Docs Digitais</div>
<div style="left:1001px;top:796px;width:80px;height:25px;border:1px solid #7a7a7a;border-radius:3px;box-sizing:border-box;background:linear-gradient(#fdfdfd,#f3f5f7 40%,#dde2e8 60%,#e9ecef);"></div>
<div class="t" style="left:981.0px;width:120px;text-align:center;top:803.07px;font-size:11.5px;color:#111;">Acerto valor</div>
<div style="left:1087px;top:796px;width:80px;height:25px;border:1px solid #7a7a7a;border-radius:3px;box-sizing:border-box;background:linear-gradient(#fdfdfd,#f3f5f7 40%,#dde2e8 60%,#e9ecef);"></div>
<div class="t" style="left:1067.0px;width:120px;text-align:center;top:803.07px;font-size:11.5px;color:#111;">Apagar Linha</div>
<div style="left:1172px;top:796px;width:80px;height:25px;border:1px solid #7a7a7a;border-radius:3px;box-sizing:border-box;background:linear-gradient(#fdfdfd,#f3f5f7 40%,#dde2e8 60%,#e9ecef);"></div>
<div class="t" style="left:1152.0px;width:120px;text-align:center;top:803.07px;font-size:11.5px;color:#111;"><u>T</u>erminar</div>
</body></html>
